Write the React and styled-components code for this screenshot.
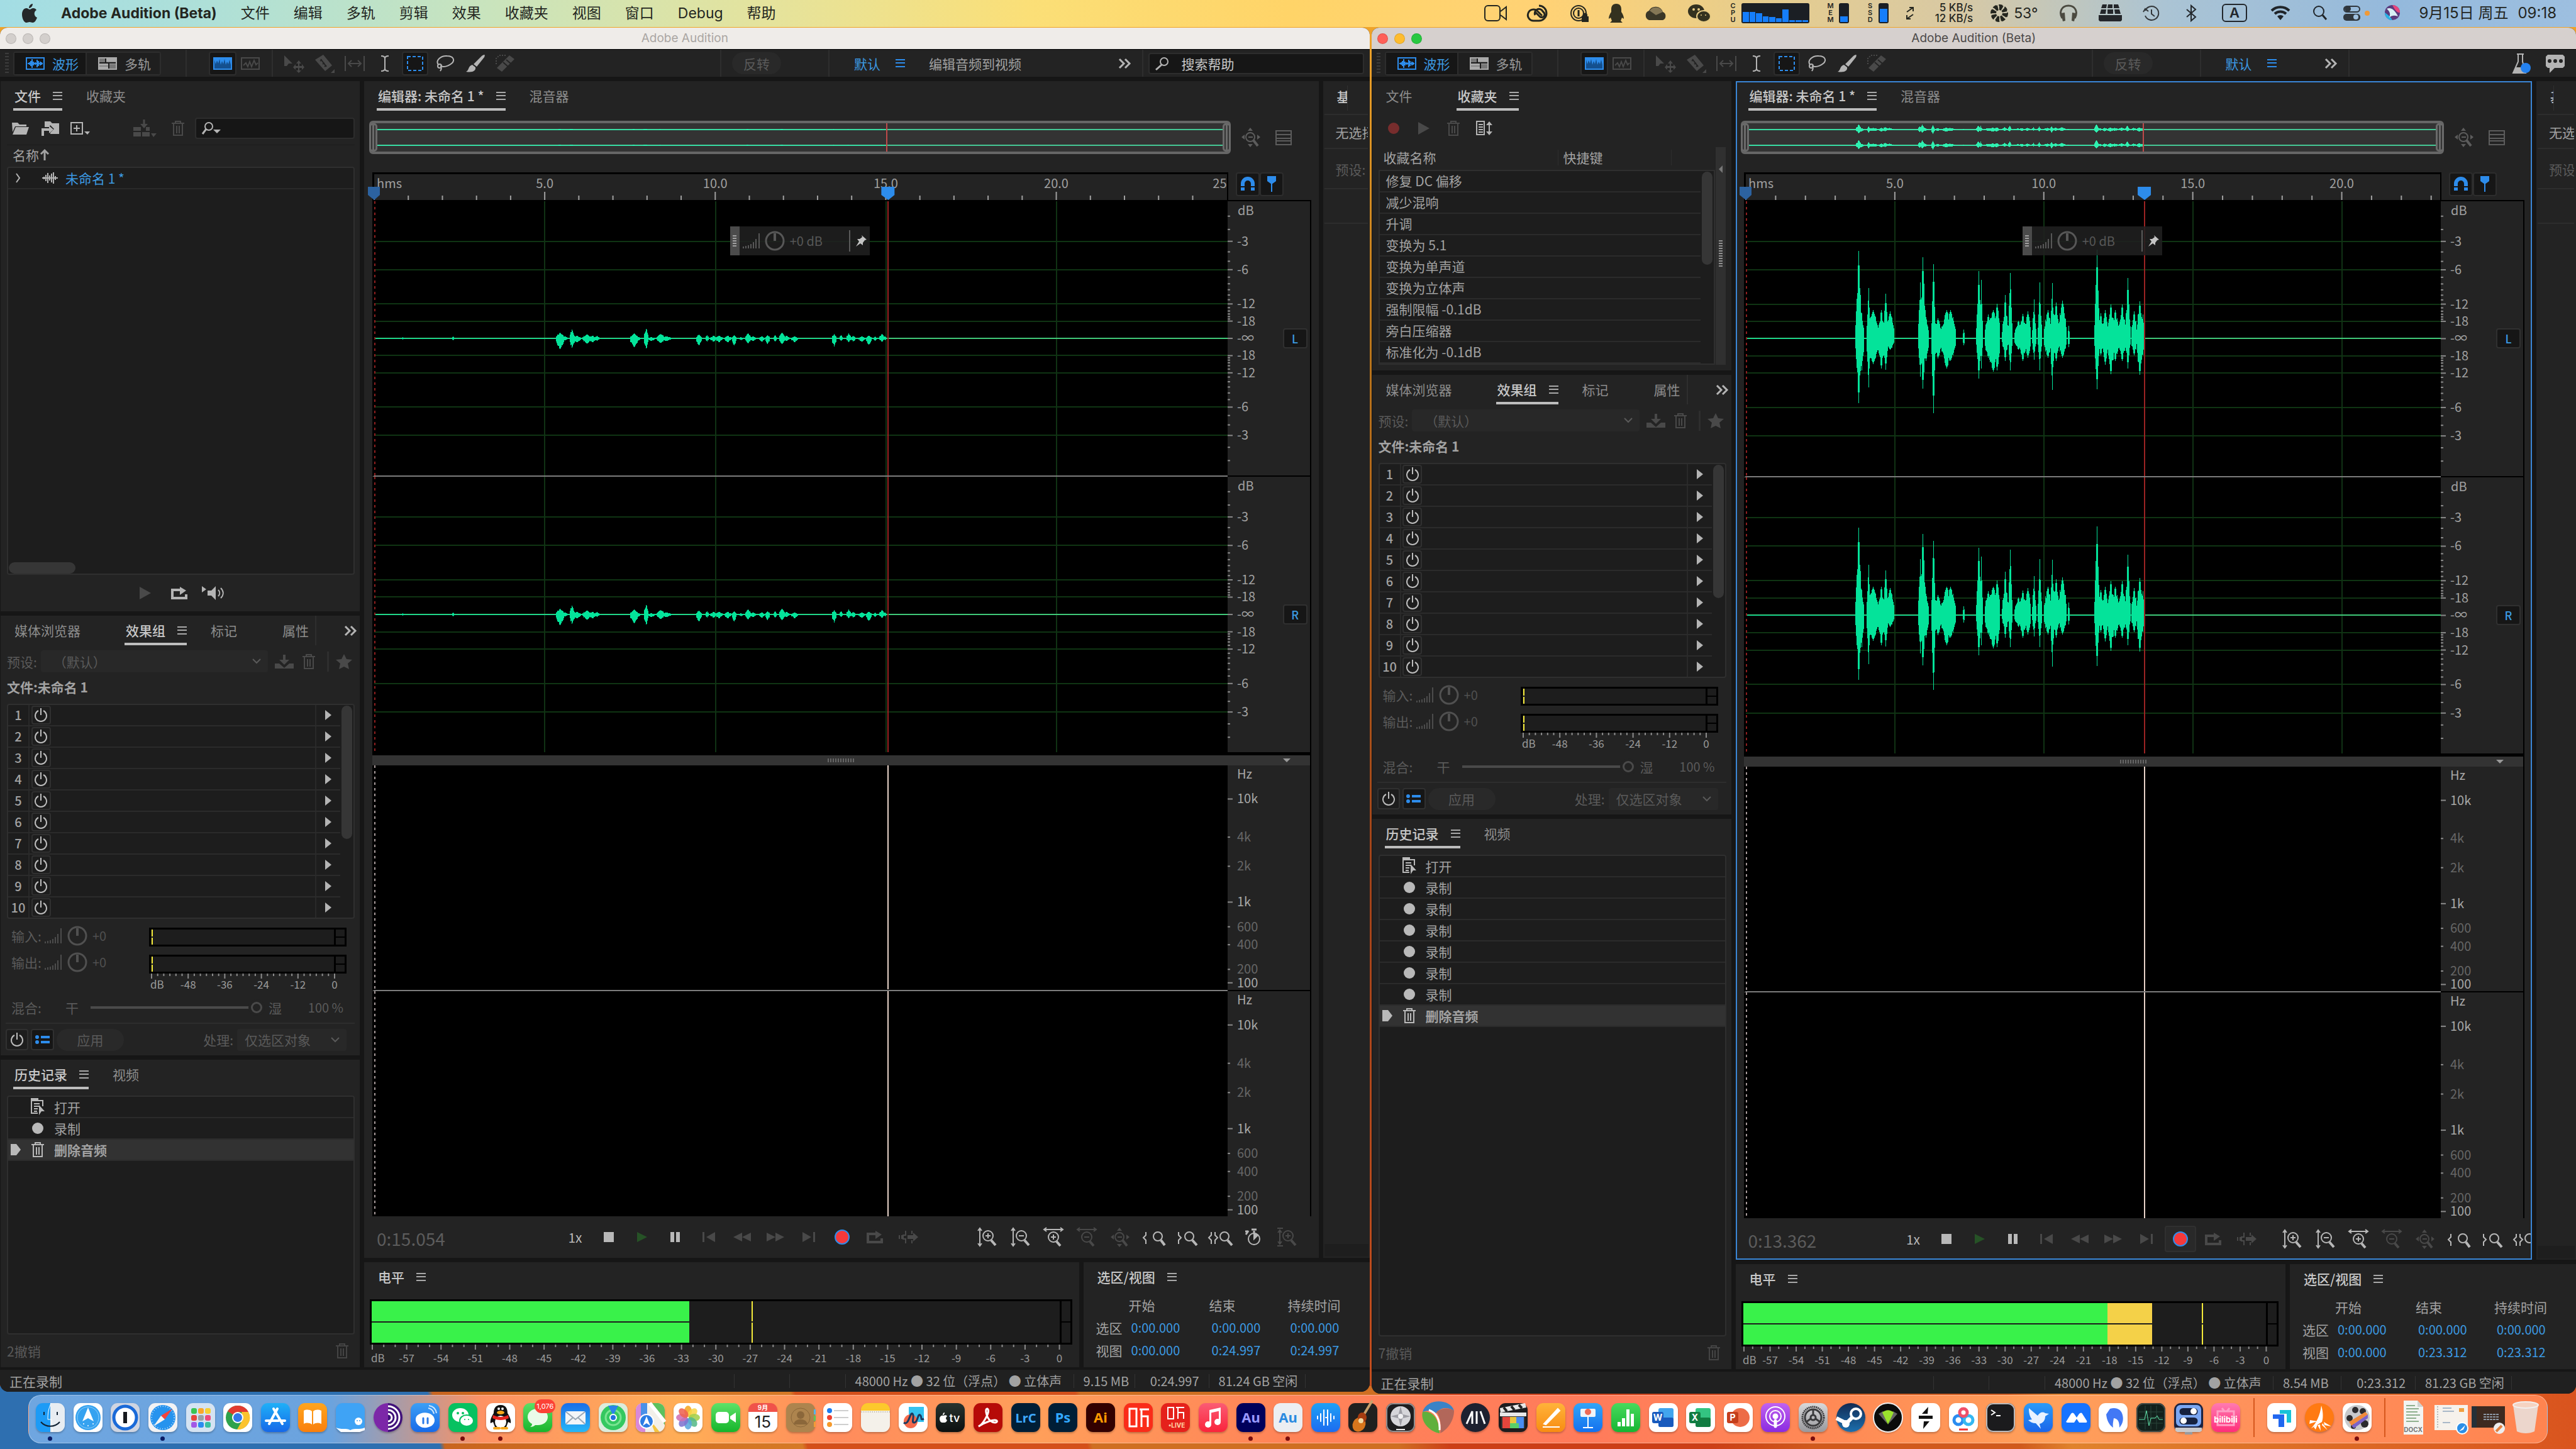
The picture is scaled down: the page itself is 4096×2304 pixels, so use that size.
import styled, { createGlobalStyle } from 'styled-components'

const GlobalStyle = createGlobalStyle`
  * { box-sizing: border-box; }
  body { margin: 0; background: #161616; }
  button, input, select, table { font: inherit; color: inherit; }
  button { padding: 0; border: 0; background: none; }
  h2 { margin: 0; font: inherit; }
`

const uiFont = `'Noto Sans CJK SC', 'Noto Sans', sans-serif`
const macFont = `Inter, 'Noto Sans CJK SC', sans-serif`

const c = {
  gap: '#161616',
  panel: '#232323',
  field: '#1d1d1d',
  line: '#2f2f2f',
  text: '#a2a2a2',
  bright: '#c8c8c8',
  dim: '#5a5a5a',
  off: '#494949',
  blue: '#2d8ceb',
  link: '#3c9ae2'
}

/* ---------- glyphs ---------- */

const glyphs = {
  waveform: [30, 20, <g fill="none" stroke="currentColor"><rect x="1" y="1" width="28" height="18" strokeWidth="2" /><path d="M3 10h24" strokeWidth="2" /><path d="M6 8v4M8 6v8M10 3v14M12 7v6M15 8v4M18 4v12M20 6v8M23 7v6M25 8v4" strokeWidth="2" /></g>],
  multitrack: [30, 20, <g><rect width="30" height="20" fill="currentColor" /><path d="M2 8h26M2 14h26" stroke="#1e1e1e" strokeWidth="1" opacity=".5" /><path d="M2 9h26M12 2v7M17 10v8" stroke="#1e1e1e" strokeWidth="2" /><path d="M2 2h9v6H2zM18 11h10v7H18z" fill="#777" /></g>],
  spectrum: [30, 20, <g><rect width="30" height="20" fill="currentColor" /><path d="M2 4l2 7 2-6 2 5 2-7 2 9 2-6 2 5 2-8 2 9 2-5 2 4 2-7 2 8V18H2z" fill="#14508f" /></g>],
  waveDim: [30, 20, <g fill="none" stroke="currentColor" strokeWidth="2"><rect x="1" y="1" width="28" height="18" /><path d="M4 13l4-4 3 6 3-8 3 8 4-10 3 7 3-3" /></g>],
  move: [32, 26, <g fill="currentColor"><path d="M0 0l13 13H7l-3 4H0z" /><path d="M23 8l4 5h-3v4h4v-3l4 5-4 4v-3h-4v4h3l-4 4-4-4h3v-4h-4v3l-4-4 4-5v3h4v-4h-3z" /></g>],
  razor: [32, 30, <g><path d="M1 9L14 1l14 17-11 9z" fill="currentColor" /><path d="M10 8l9 12M9 11l3-2M13 16l3-2M16 20l3-2" stroke="#232323" strokeWidth="2" /><path d="M32 24v6h-6z" fill="currentColor" /></g>],
  slip: [34, 24, <g fill="none" stroke="currentColor" strokeWidth="2"><path d="M2 0v24M32 0v24M8 12h18M12 7l-5 5 5 5M22 7l5 5-5 5" /></g>],
  ibeam: [14, 26, <path d="M1 1c4 0 6 1 6 4v16c0 3-2 4-6 4M13 1c-4 0-6 1-6 4v16c0 3 2 4 6 4" fill="none" stroke="currentColor" strokeWidth="2" />],
  marquee: [26, 24, <rect x="1" y="1" width="24" height="22" fill="none" stroke="currentColor" strokeWidth="2" strokeDasharray="5 3" />],
  lasso: [30, 26, <g fill="none" stroke="currentColor" strokeWidth="2"><path d="M4 15C-1 8 8 0 18 1c10 0 13 7 7 12-5 4-12 6-18 4" /><circle cx="6" cy="17" r="3" /><path d="M8 19c2 2 0 4-1 6" /></g>],
  brush: [30, 28, <g fill="currentColor"><path d="M29 0c1 0 1 2 0 4L17 19l-5-4L25 2c1-1 3-2 4-2z" /><path d="M10 16l5 4c1 5-4 9-15 7 5-2 3-9 10-11z" /></g>],
  heal: [32, 28, <g><path d="M22 1l8 6-20 20-8-6z" fill="currentColor" /><path d="M12 12l8 7M17 8l7 6" stroke="#232323" strokeWidth="2" /><path d="M16 1H6L1 6v10" fill="none" stroke="currentColor" strokeWidth="2" strokeDasharray="2 2" /></g>],
  menu: [15, 13, <path d="M0 1h15M0 6h15M0 12h15" stroke="currentColor" strokeWidth="2" />],
  more: [18, 16, <path d="M1 1l7 7-7 7M10 1l7 7-7 7" fill="none" stroke="currentColor" strokeWidth="3" />],
  search: [22, 22, <g fill="none" stroke="currentColor"><circle cx="14" cy="8" r="6" strokeWidth="2" /><path d="M10 13l-9 8" strokeWidth="3" /></g>],
  searchDown: [30, 22, <g><circle cx="11" cy="8" r="6" fill="none" stroke="currentColor" strokeWidth="2" /><path d="M7 12l-6 8" stroke="currentColor" strokeWidth="3" /><path d="M18 13h12l-6 6z" fill="currentColor" /></g>],
  folder: [27, 20, <path d="M0 1h9l3 3h11v3H5L1 16zM6 8h21l-4 12H1z" fill="currentColor" />],
  import: [29, 24, <g fill="currentColor"><path d="M6 1h9l3 3h11v17H15v-2l6-6-6-6-2 3H6z" /><path d="M13 8l7 6-7 6v-4H5v8H1V12h12z" /></g>],
  newFile: [31, 20, <g><path d="M1 1h18v18H1zM10 5v10M5 10h10" fill="none" stroke="currentColor" strokeWidth="2" /><path d="M22 15h9l-4 5z" fill="currentColor" /></g>],
  insert: [37, 28, <g><path d="M0 12h12v6H0zM0 20h12v7H0zM14 20h12v7H14zM20 12h6v6h-6z" fill="currentColor" /><path d="M17 0v8" stroke="currentColor" strokeWidth="3" /><path d="M11 7h12l-6 7zM28 22h9l-5 6z" fill="currentColor" /></g>],
  trash: [20, 24, <g fill="none" stroke="currentColor" strokeWidth="2"><path d="M0 4h20M6 4V1h8v3M3 5v18h14V5M8 8v12M12 8v12" /></g>],
  play: [18, 20, <path d="M0 0l18 10L0 20z" fill="currentColor" />],
  loop: [28, 20, <g><path d="M11 5H2v13h22v-6" fill="none" stroke="currentColor" strokeWidth="4" /><path d="M14 0l10 6-10 7z" fill="currentColor" /><path d="M8 5h8" stroke="currentColor" strokeWidth="4" /></g>],
  speaker: [36, 24, <g><path d="M0 1l7 5-7 5zM9 8h6l7-7v22l-7-7H9z" fill="currentColor" /><path d="M26 7c3 3 3 7 0 10M30 4c5 5 5 11 0 16" fill="none" stroke="currentColor" strokeWidth="2" /></g>],
  chevronRight: [8, 16, <path d="M1 1l5 7-5 7" fill="none" stroke="currentColor" strokeWidth="2" />],
  chevronDown: [14, 8, <path d="M1 1l6 6 6-6" fill="none" stroke="currentColor" strokeWidth="2" />],
  wave: [25, 18, <path d="M0 9h25M3 7v4M6 4v10M9 1v16M12 5v8M15 2v14M18 0v18M21 6v6" stroke="currentColor" strokeWidth="2" />],
  arrowUp: [14, 18, <path d="M7 18V3M1 8l6-6 6 6" fill="none" stroke="currentColor" strokeWidth="3" />],
  save: [30, 22, <g fill="currentColor"><path d="M13 0h4v8h6l-8 8-8-8h6z" /><path d="M0 14h7l8 7 8-7h7v8H0z" /></g>],
  star: [26, 24, <path d="M13 0l4 8 9 1-7 6 2 9-8-4-8 4 2-9-7-6 9-1z" fill="currentColor" />],
  power: [20, 22, <path d="M6 4a9 9 0 1 0 8 0M10 0v11" fill="none" stroke="currentColor" strokeWidth="2" />],
  right: [10, 16, <path d="M0 0l10 8-10 8z" fill="currentColor" />],
  bars: [27, 24, <path d="M1 21v3M5 20v4M9 19v5M13 17v7M17 14v10M21 9v15M26 0v24" stroke="currentColor" strokeWidth="2" />],
  knob: [32, 32, <g fill="none" stroke="currentColor"><circle cx="16" cy="16" r="14" strokeWidth="3" /><path d="M16 4v12" strokeWidth="4" /></g>],
  list: [22, 14, <g fill="currentColor"><circle cx="2" cy="3" r="3" /><circle cx="2" cy="11" r="3" /><path d="M8 1h14v4H8zM8 9h14v4H8z" /></g>],
  openDoc: [22, 26, <g><path d="M0 0h11v3h8v9" fill="none" stroke="currentColor" strokeWidth="2" /><path d="M0 0h10v4H0z" fill="currentColor" /><path d="M1 2v21h10M5 8h9M5 12h8M5 16h6M5 20h5" fill="none" stroke="currentColor" strokeWidth="2" /><path d="M13 10l9 10h-5l-4 6z" fill="currentColor" /></g>],
  dot: [18, 18, <circle cx="9" cy="9" r="9" fill="currentColor" />],
  pointer: [16, 18, <path d="M0 0h9l7 9-7 9H0z" fill="currentColor" />],
  sort: [26, 24, <g><path d="M1 1h12v21H1zM4 6h7M4 10h7M4 14h7M4 18h7" fill="none" stroke="currentColor" strokeWidth="2" /><path d="M21 3v18" stroke="currentColor" strokeWidth="2" /><path d="M16 7l5-6 5 6zM16 17l5 6 5-6z" fill="currentColor" /></g>],
  fit: [30, 31, <g><circle cx="14" cy="15" r="7" fill="none" stroke="currentColor" strokeWidth="2" /><path d="M11 15h7" stroke="currentColor" strokeWidth="2" /><path d="M19 20l7 9" stroke="currentColor" strokeWidth="4" /><path d="M10 5l4-5 4 5zM10 26l4 5 4-5zM5 11v8l-5-4zM25 11v8l5-4z" fill="currentColor" /></g>],
  rows: [26, 24, <g><rect x="1" y="1" width="24" height="22" fill="none" stroke="currentColor" strokeWidth="2" /><path d="M1 7h24M1 13h24M1 17h24" stroke="currentColor" strokeWidth="2" /></g>],
  magnet: [22, 22, <g><path d="M3 21V10a8 8 0 0 1 16 0v11" fill="none" stroke="currentColor" strokeWidth="6" /><path d="M0 15h6M16 15h6" stroke="#161616" strokeWidth="2" /></g>],
  pin: [14, 26, <g><path d="M0 0h14v8l-7 5-7-5z" fill="currentColor" /><path d="M7 12v13" stroke="currentColor" strokeWidth="2" /></g>],
  tack: [18, 18, <path d="M10 0l8 7-3 1-3 4v4l-4-3-7 5 5-8-3-4h4l4-3z" fill="currentColor" />],
  stop: [16, 16, <rect width="16" height="16" fill="currentColor" />],
  playSmall: [16, 16, <path d="M0 0l16 8-16 8z" fill="currentColor" />],
  pause: [16, 16, <path d="M0 0h6v16H0zM9 0h6v16H9z" fill="currentColor" />],
  prev: [20, 16, <path d="M0 0h3v16H0zM20 0v16L6 8z" fill="currentColor" />],
  rewind: [28, 14, <path d="M14 0v14L0 7zM28 0v14L14 7z" fill="currentColor" />],
  forward: [28, 14, <path d="M0 0v14l14-7zM14 0v14l14-7z" fill="currentColor" />],
  next: [20, 16, <path d="M17 0h3v16h-3zM0 0v16l14-8z" fill="currentColor" />],
  record: [26, 26, <circle cx="13" cy="13" r="11" fill="#f5393b" stroke={c.blue} strokeWidth="2" />],
  skip: [30, 20, <g><path d="M10 0v7h-4v6h4v7M20 0v5M20 15v5M0 7v6M4 7v6" fill="none" stroke="currentColor" strokeWidth="2" /><path d="M13 7h9V3l8 7-8 7v-4h-9z" fill="currentColor" /></g>],
  zoomInV: [30, 30, <g fill="none" stroke="currentColor" strokeWidth="2"><path d="M4 2v26M1 5l3-4 3 4M1 25l3 4 3-4" /><circle cx="17" cy="13" r="8" /><path d="M13 13h8M17 9v8" /><path d="M22 20l7 8" strokeWidth="4" /></g>],
  zoomOutV: [30, 30, <g fill="none" stroke="currentColor" strokeWidth="2"><path d="M4 2v26M1 5l3-4 3 4M1 25l3 4 3-4" /><circle cx="17" cy="13" r="8" /><path d="M13 13h8" /><path d="M22 20l7 8" strokeWidth="4" /></g>],
  zoomInH: [32, 30, <g fill="none" stroke="currentColor" strokeWidth="2"><path d="M2 3h28M5 0L1 3l4 3M27 0l4 3-4 3" /><circle cx="16" cy="15" r="8" /><path d="M12 15h8M16 11v8" /><path d="M21 22l6 7" strokeWidth="4" /></g>],
  zoomOutH: [32, 30, <g fill="none" stroke="currentColor" strokeWidth="2"><path d="M2 3h28M5 0L1 3l4 3M27 0l4 3-4 3" /><circle cx="16" cy="15" r="8" /><path d="M12 15h8" /><path d="M21 22l6 7" strokeWidth="4" /></g>],
  zoomL: [34, 28, <g fill="none" stroke="currentColor" strokeWidth="2"><path d="M5 6v5l-4 4 4 4v6" /><circle cx="24" cy="13" r="7" /><path d="M29 19l6 8" strokeWidth="4" /></g>],
  zoomR: [32, 28, <g fill="none" stroke="currentColor" strokeWidth="2"><path d="M3 6v5l4 4-4 4v6" /><circle cx="20" cy="13" r="7" /><path d="M25 19l7 8" strokeWidth="4" /></g>],
  zoomLR: [38, 28, <g fill="none" stroke="currentColor" strokeWidth="2"><path d="M5 6v5l-4 4 4 4v6M11 6v5l4 4-4 4v6" /><circle cx="26" cy="13" r="7" /><path d="M31 19l7 8" strokeWidth="4" /></g>],
  timer: [26, 28, <g fill="none" stroke="currentColor" strokeWidth="2"><circle cx="14" cy="17" r="9" /><path d="M14 4v4M10 2h8M1 10l4-6M0 5h5" strokeWidth="3" /><path d="M14 17V8a9 9 0 0 1 6 3z" fill="currentColor" /></g>],
  zoomBar: [30, 30, <g fill="none" stroke="currentColor" strokeWidth="2"><path d="M4 4v22M0 1h9M0 29h9M1 8l3-4 3 4M1 22l3 4 3-4" /><circle cx="17" cy="13" r="8" /><path d="M13 13h8M17 9v8" /><path d="M22 20l7 8" strokeWidth="4" /></g>],
  flask: [30, 32, <g><path d="M8 1h11M10 1v12L2 31h20l-5-18V1" fill="none" stroke="#b4b4b4" strokeWidth="2" /><path d="M6 22h12l4 9H2z" fill="#b4b4b4" /><circle cx="22" cy="23" r="8" fill="#2482f0" /></g>],
  chat: [30, 30, <g><path d="M3 1h24l3 3v15l-3 3H14l-8 8v-8H3l-3-3V4z" fill="#b4b4b4" /><g fill="#232323"><circle cx="6" cy="11" r="3" /><circle cx="15" cy="11" r="3" /><circle cx="24" cy="11" r="3" /></g></g>]
}

const Glyph = styled.svg`
  display: block;
  flex: none;
  overflow: visible;
  color: ${p => p.$color || 'inherit'};
`

const Icon = ({ name, color }) => {
  const [w, h, art] = glyphs[name]
  return (
    <Glyph width={w} height={h} viewBox={`0 0 ${w} ${h}`} $color={color} aria-hidden="true">
      {art}
    </Glyph>
  )
}

/* ---------- desktop ---------- */

const Desktop = styled.div`
  display: flex;
  flex-direction: column;
  min-width: 100vw;
  height: 100vh;
  overflow: hidden;
  font-family: ${uiFont};
  font-size: 21px;
  line-height: 30px;
  color: ${c.text};
  background:
    linear-gradient(77deg, #2e6fb0 0 17%, #c9651f 17.2%, #d67a26 31%, #d4501a 31.2% 42%, #cf6f22 42.2% 54%, #cc3f17 56% 66%, #d05a1d 70% 78%, #e0832d 80%, #d9531e 100%) bottom / 100% 100px no-repeat,
    linear-gradient(180deg, #f3a72b, #b8741b 25%, #a2431a 60%, #c9501f);
`

const MenuBar = styled.header`
  display: flex;
  align-items: center;
  height: 43px;
  margin-bottom: 1px;
  padding: 0 31px 2px 35px;
  font-family: ${macFont};
  font-size: 23px;
  line-height: 28px;
  color: #24261f;
  background: linear-gradient(90deg, #a3dde4, #aee0d8 8%, #c9e4bd 19%, #e5e39c 30%, #fbdf77 40%, #ffd468 50%, #ffd275 60%, #e7cd8c 68%, #d8c9a4 76%, #abc4d4 84%, #94b9dc 93%, #9dbfe0);
`

const Menus = styled.nav`
  display: flex;
  align-items: center;
  gap: 38px;
`

const MenuItem = styled.button`
  font-weight: ${p => (p.$strong ? 700 : 400)};
  white-space: nowrap;
`

const Tray = styled.div`
  display: flex;
  align-items: center;
  margin-left: auto;
`

const TrayItem = styled.button`
  display: flex;
  align-items: center;
  gap: 8px;
  height: 34px;
  margin-left: ${p => p.$gap || 32}px;
`

const StackedLetters = styled.span`
  width: 11px;
  font-size: 11px;
  line-height: 11px;
  font-weight: 600;
  text-align: center;
  word-break: break-all;
`

const Gauge = styled.span`
  display: flex;
  align-items: flex-end;
  gap: 1px;
  width: ${p => p.$width}px;
  height: 32px;
  padding: 2px;
  border-radius: 3px;
  background: #1b1f24;
`

const GaugeBar = styled.i`
  flex: 1;
  background: #157efb;
`

const NetRates = styled.span`
  width: 86px;
  font-size: 17px;
  line-height: 17px;
  font-weight: 500;
  text-align: right;
`

const Clock = styled.time`
  display: flex;
  gap: 15px;
  margin-left: 29px;
  font-size: 24px;
  white-space: nowrap;
`

const menus = ['文件', '编辑', '多轨', '剪辑', '效果', '收藏夹', '视图', '窗口', 'Debug', '帮助']
const cpuLoad = [56, 56, 50, 32, 26, 20, 70, 8, 8, 8]

const TraySvg = ({ w, h = 28, children }) => (
  <Glyph width={w} height={h} viewBox={`0 0 ${w} ${h}`} aria-hidden="true">{children}</Glyph>
)

const TopMenu = () => (
  <MenuBar>
    <Menus>
      <MenuItem aria-label="Apple">
        <TraySvg w={24} h={30}>
          <path d="M17 0c0 4-3 7-6 7 0-4 3-7 6-7zM12 9c2 0 3-2 6-2 2 0 4 1 5 3-5 3-4 10 1 12-2 5-4 8-7 8-2 0-3-1-5-1s-3 1-5 1C3 30 0 23 0 17 0 11 3 7 7 7c2 0 4 2 5 2z" fill="#25282a" />
        </TraySvg>
      </MenuItem>
      <MenuItem $strong>Adobe Audition (Beta)</MenuItem>
      {menus.map(name => <MenuItem key={name}>{name}</MenuItem>)}
    </Menus>
    <Tray>
      <TrayItem aria-label="录屏"><TraySvg w={37} h={26}><rect x="1" y="1" width="24" height="24" rx="5" fill="none" stroke="#24261f" strokeWidth="2" /><path d="M26 10l9-7v20l-9-7" fill="none" stroke="#24261f" strokeWidth="2" /></TraySvg></TrayItem>
      <TrayItem aria-label="Creative Cloud"><TraySvg w={35} h={26}><path d="M18 1a12 12 0 1 1 0 24H10a9 9 0 1 1 5-16l8 8" fill="none" stroke="#24261f" strokeWidth="3" /><path d="M12 16a6 6 0 0 1 12-6c6 5 2 11-4 9l-8-8" fill="none" stroke="#24261f" strokeWidth="3" /></TraySvg></TrayItem>
      <TrayItem aria-label="1Password"><TraySvg w={30} h={28}><circle cx="14" cy="14" r="12" fill="none" stroke="#24261f" strokeWidth="2" /><circle cx="14" cy="14" r="8" fill="none" stroke="#24261f" strokeWidth="2" /><path d="M14 9v10" stroke="#24261f" strokeWidth="3" /><path d="M19 19h11v9H19zM21 19v-2a3 3 0 0 1 7 0v2" fill="#24261f" /></TraySvg></TrayItem>
      <TrayItem aria-label="QQ"><TraySvg w={24} h={30}><path d="M12 0c6 0 8 4 8 9v4c3 4 4 8 4 11l-3-2-2 5 3 3H2l3-3-2-5-3 2c0-3 1-7 4-11V9c0-5 2-9 8-9z" fill="#33311f" /></TraySvg></TrayItem>
      <TrayItem aria-label="OneDrive"><TraySvg w={37} h={22}><path d="M8 22a8 8 0 0 1 0-15A12 12 0 0 1 30 9a7 7 0 0 1 0 13z" fill="#3b3728" /><path d="M9 7a12 12 0 0 1 21 2l-11 5z" fill="#857756" /></TraySvg></TrayItem>
      <TrayItem aria-label="微信"><TraySvg w={37} h={28}><ellipse cx="14" cy="11" rx="13" ry="11" fill="#33311f" /><ellipse cx="26" cy="19" rx="11" ry="9" fill="#33311f" stroke="#e6cb85" strokeWidth="2" /><g fill="#e6cb85"><circle cx="10" cy="8" r="2" /><circle cx="18" cy="8" r="2" /><circle cx="22" cy="17" r="1" /><circle cx="29" cy="17" r="1" /></g></TraySvg></TrayItem>
      <TrayItem $gap={30}><StackedLetters>CPU</StackedLetters><Gauge $width={108}>{cpuLoad.map((v, i) => <GaugeBar key={i} style={{ height: `${v}%` }} />)}</Gauge></TrayItem>
      <TrayItem $gap={28}><StackedLetters>MEM</StackedLetters><Gauge $width={16}><GaugeBar style={{ height: '30%' }} /></Gauge></TrayItem>
      <TrayItem $gap={28}><StackedLetters>SSD</StackedLetters><Gauge $width={16}><GaugeBar style={{ height: '72%' }} /></Gauge></TrayItem>
      <TrayItem $gap={28} aria-label="网络"><TraySvg w={12} h={20}><path d="M1 8l10-7M5 1h6v6M11 12L1 19M1 13v6h6" fill="none" stroke="#24261f" strokeWidth="2" /></TraySvg><NetRates>5 KB/s<br />12 KB/s</NetRates></TrayItem>
      <TrayItem $gap={28}><TraySvg w={29} h={28}><circle cx="14" cy="14" r="9" fill="none" stroke="#24261f" strokeWidth="8" strokeDasharray="5 2" /><circle cx="14" cy="14" r="13" fill="none" stroke="#24261f" strokeWidth="2" strokeDasharray="6 4" /></TraySvg>53°</TrayItem>
      <TrayItem $gap={35} aria-label="耳机"><TraySvg w={28} h={27}><path d="M4 22C-2 11 4 2 14 2s16 9 10 20" fill="none" stroke="#4b4a40" strokeWidth="3" /><path d="M2 14l6-1 1 13-4 1zM26 14l-6-1-1 13 4 1z" fill="#4b4a40" /></TraySvg></TrayItem>
      <TrayItem $gap={34} aria-label="存储"><TraySvg w={37} h={27}><path d="M6 0h7l-1 6H4zM15 0h7v6h-8zM24 0h7l2 6h-9zM4 8h8l-1 7H2zM14 8h9v7h-9zM25 8h8l2 7h-9zM0 17h37v8l-2 2H2l-2-2z" fill="#24262a" /></TraySvg></TrayItem>
      <TrayItem $gap={34} aria-label="时间机器"><TraySvg w={26} h={26}><path d="M3 9a11 11 0 1 1 0 8M13 7v7l5 4M0 11l3-5 5 4" fill="none" stroke="#33373a" strokeWidth="2" /></TraySvg></TrayItem>
      <TrayItem $gap={42} aria-label="蓝牙"><TraySvg w={17} h={26}><path d="M1 7l14 12-7 6V1l7 6L1 19" fill="none" stroke="#24282c" strokeWidth="2" /></TraySvg></TrayItem>
      <TrayItem $gap={40} aria-label="输入法"><TraySvg w={40} h={29}><rect x="1" y="1" width="38" height="27" rx="5" fill="none" stroke="#22272d" strokeWidth="2" /><text x="20" y="22" fontSize="22" fontWeight="600" textAnchor="middle" fill="#22272d">A</text></TraySvg></TrayItem>
      <TrayItem $gap={37} aria-label="无线局域网"><TraySvg w={32} h={23}><path d="M2 8a20 20 0 0 1 28 0M7 13a13 13 0 0 1 18 0" fill="none" stroke="#1f2429" strokeWidth="4" /><path d="M11 17a7 7 0 0 1 10 0l-5 6z" fill="#1f2429" /></TraySvg></TrayItem>
      <TrayItem $gap={36} aria-label="搜索"><TraySvg w={22} h={23}><circle cx="9" cy="9" r="8" fill="none" stroke="#1f2429" strokeWidth="2" /><path d="M15 15l6 7" stroke="#1f2429" strokeWidth="3" /></TraySvg></TrayItem>
      <TrayItem $gap={26} aria-label="控制中心"><TraySvg w={42} h={24}><rect x="1" y="1" width="25" height="9" rx="5" fill="none" stroke="#2f363d" strokeWidth="2" /><circle cx="7" cy="5" r="5" fill="#2f363d" /><rect x="0" y="13" width="27" height="11" rx="5" fill="#2f363d" /><circle cx="20" cy="18" r="4" fill="#9fc0df" /><circle cx="38" cy="12" r="4" fill="#f09a37" /></TraySvg></TrayItem>
      <TrayItem $gap={24} aria-label="Siri"><TraySvg w={25} h={25}><circle cx="12" cy="12" r="12" fill="#5b3b7d" /><path d="M12 0a12 12 0 0 1 12 12c-5 0-8-4-12-12z" fill="#e9457c" /><path d="M0 12c4 3 8 5 12 12A12 12 0 0 1 0 12z" fill="#27b3e6" /><path d="M3 6c6-3 12 0 18 12-5-2-10-2-14 2 2-5 2-9-4-14z" fill="#d9f0f4" /></TraySvg></TrayItem>
      <Clock><span>9月15日 周五</span><span>09:18</span></Clock>
    </Tray>
  </MenuBar>
)

/* ---------- window chrome ---------- */

const Windows = styled.main`
  display: grid;
  grid-template-columns: minmax(0, 2177fr) minmax(0, 1915fr);
  gap: 3px;
  flex: 1;
  min-height: 0;
`

const AppWindow = styled.section`
  display: flex;
  flex-direction: column;
  min-height: 0;
  margin-bottom: ${p => (p.$front ? 0 : 3)}px;
  overflow: hidden;
  border-radius: 12px 12px 14px 14px;
  background: ${c.gap};
`

const TitleBar = styled.div`
  display: grid;
  grid-template-columns: 1fr auto 1fr;
  align-items: center;
  height: 35px;
  padding: 0 9px;
  border-bottom: 1px solid #000;
  font-family: ${macFont};
  font-size: 19px;
  color: ${p => (p.$front ? '#4d4a49' : '#aaa6a3')};
  background: ${p => (p.$front ? '#d6d0ce' : '#efece9')};
`

const Lights = styled.div`
  display: flex;
  gap: 10px;
`

const Light = styled.button`
  width: 17px;
  height: 17px;
  border-radius: 50%;
  border: 1px solid rgba(0, 0, 0, 0.12);
  background: ${p => p.$color};
`

const Toolbar = styled.div`
  display: flex;
  flex: none;
  height: 43px;
  margin-bottom: 7px;
  background: ${c.panel};
`

const ToolSection = styled.div`
  display: flex;
  align-items: center;
  flex: ${p => p.$flex || 'none'};
  gap: ${p => p.$gap || 0}px;
  padding: 0 ${p => p.$right || 0}px 0 ${p => p.$left || 0}px;
  border-right: ${p => (p.$last ? '0' : '2px solid #2e2e2e')};
`

const Grip = styled.i`
  width: 6px;
  height: 34px;
  margin-right: 7px;
  background: repeating-linear-gradient(180deg, #3c3c3c 0 2px, transparent 2px 5px);
`

const ModeSwitch = styled.div`
  display: flex;
  height: 38px;
  border: 2px solid #2d2d2d;
  border-radius: 4px;
`

const ModeButton = styled.button`
  display: flex;
  align-items: center;
  gap: 12px;
  padding: 0 ${p => (p.$on ? 11 : 14)}px 0 18px;
  color: ${p => (p.$on ? c.link : '#999')};
  background: ${p => (p.$on ? '#161616' : '#1f1f1f')};
  & + & { border-left: 2px solid #2d2d2d; }
`

const ToolButton = styled.button`
  display: flex;
  align-items: center;
  justify-content: center;
  width: ${p => p.$width || 42}px;
  height: 38px;
  border-radius: 4px;
  border: 2px solid ${p => (p.$on ? '#2d2d2d' : 'transparent')};
  background: ${p => (p.$on ? '#161616' : 'transparent')};
  color: ${p => p.$color || '#b4b4b4'};
`

const Pill = styled.button`
  width: ${p => p.$width}px;
  height: 35px;
  border-radius: 18px;
  background: #292929;
  color: ${c.dim};
`

const Workspace = styled.button`
  display: flex;
  align-items: center;
  gap: 24px;
  color: ${p => (p.$on ? c.link : c.text)};
`

const PlainButton = styled.button`
  display: flex;
  align-items: center;
  justify-content: center;
  color: ${p => p.$color || '#b4b4b4'};
  margin-left: ${p => (p.$push ? 'auto' : `${p.$gap || 0}px`)};
`

const SearchBox = styled.label`
  display: flex;
  align-items: center;
  flex: 1;
  gap: ${p => p.$gap || 6}px;
  height: ${p => p.$height || 34}px;
  min-width: 0;
  padding: 0 9px;
  border: 2px solid #2d2d2d;
  border-radius: 4px;
  background: #161616;
  input {
    flex: 1;
    min-width: 0;
    padding: 0;
    border: 0;
    outline: 0;
    background: none;
  }
  input::placeholder { color: ${c.bright}; opacity: 1; }
`

const tools = [
  ['move', '移动工具', c.off],
  ['razor', '切断工具', c.off],
  ['slip', '滑动工具', c.off],
  ['ibeam', '时间选择工具'],
  ['marquee', '框选工具', c.blue],
  ['lasso', '套索选择工具'],
  ['brush', '画笔选择工具'],
  ['heal', '污点修复画笔', c.off]
]

const TopToolbar = ({ front }) => (
  <Toolbar>
    <ToolSection $left={8} $right={39}>
      <Grip />
      <ModeSwitch>
        <ModeButton $on><Icon name="waveform" color={c.blue} />波形</ModeButton>
        <ModeButton><Icon name="multitrack" color="#aaa" />多轨</ModeButton>
      </ModeSwitch>
    </ToolSection>
    <ToolSection $left={35} $right={12}>
      <ToolButton $on $width={44} $color={c.blue} aria-label="波形视图"><Icon name="spectrum" /></ToolButton>
      <ToolButton $width={44} $color={c.off} aria-label="频谱视图"><Icon name="waveDim" /></ToolButton>
    </ToolSection>
    <ToolSection $flex="0 0 713px" $left={13} $gap={6}>
      {tools.map(([name, label, color]) => (
        <ToolButton key={name} $on={name === 'marquee'} $color={color} aria-label={label}><Icon name={name} /></ToolButton>
      ))}
    </ToolSection>
    <ToolSection $left={17} $right={75}><Pill $width={78} disabled>反转</Pill></ToolSection>
    <ToolSection $flex={front ? '0 0 236px' : '1'} $left={39} $right={19} $gap={38}>
      <Workspace $on>默认 <Icon name="menu" color={c.blue} /></Workspace>
      {!front && <Workspace>编辑音频到视频</Workspace>}
      <PlainButton $push aria-label="更多工作区"><Icon name="more" /></PlainButton>
    </ToolSection>
    {front ? (
      <ToolSection $flex="1" $right={18} $last>
        <PlainButton $push aria-label="Beta 反馈"><Icon name="flask" /></PlainButton>
        <PlainButton $gap={24} aria-label="反馈"><Icon name="chat" /></PlainButton>
      </ToolSection>
    ) : (
      <ToolSection $flex="0 0 360px" $left={8} $right={9} $last>
        <SearchBox $gap={20}><Icon name="search" color="#b4b4b4" /><input aria-label="搜索帮助" placeholder="搜索帮助" /></SearchBox>
      </ToolSection>
    )}
  </Toolbar>
)

const Columns = styled.div`
  display: grid;
  grid-template-columns: 571px minmax(0, 1fr);
  gap: 7px;
  flex: 1;
  min-height: 0;
  margin: 0 0 4px 1px;
`

const Column = styled.div`
  display: flex;
  flex-direction: column;
  gap: 7px;
  min-width: 0;
  min-height: 0;
`

const Panel = styled.section`
  display: flex;
  flex-direction: column;
  flex: ${p => (p.$grow ? `${p.$grow} 1 0` : 'none')};
  min-width: 0;
  min-height: 0;
  overflow: hidden;
  background: ${c.panel};
  outline: ${p => (p.$focus ? `2px solid #3a86d6` : '0')};
  outline-offset: -2px;
`

const TabBar = styled.div`
  display: flex;
  align-items: stretch;
  flex: none;
  height: 47px;
`

const TabList = styled.div`
  display: flex;
  gap: 36px;
  flex: 0 0 auto;
  width: ${p => (p.$width ? `${p.$width}px` : 'auto')};
  padding-left: 20px;
  overflow: hidden;
  border-right: ${p => (p.$width ? `2px solid #2e2e2e` : '0')};
`

const Tab = styled.button`
  display: flex;
  align-items: center;
  flex: none;
  gap: 19px;
  padding: 2px ${p => (p.$on ? 0 : 34)}px 0 2px;
  border-bottom: 4px solid ${p => (p.$line ? '#bdbdbd' : 'transparent')};
  color: ${p => (p.$on ? c.bright : '#8d8d8d')};
  font-weight: ${p => (p.$on ? 500 : 400)};
  white-space: nowrap;
  svg { margin-top: 2px; }
`

const Tabs = ({ names, active, width, more, flat }) => (
  <TabBar role="tablist">
    <TabList $width={width}>
      {names.map(name => (
        <Tab key={name} role="tab" $on={name === active} $line={name === active && !flat}>
          {name}
          {name === active && <Icon name="menu" color="#a8a8a8" />}
        </Tab>
      ))}
    </TabList>
    {more && <MoreTabs aria-label="更多面板"><Icon name="more" /></MoreTabs>}
  </TabBar>
)

const MoreTabs = styled.button`
  margin-left: auto;
  padding: 0 6px 0 0;
  color: #b4b4b4;
`

/* ---------- file panel ---------- */

const PanelTools = styled.div`
  display: flex;
  align-items: center;
  flex: none;
  height: 34px;
  margin: 11px 8px 9px 18px;
`

const ListBox = styled.div`
  position: relative;
  flex: ${p => (p.$fill ? 1 : 'none')};
  min-height: 0;
  margin: 0 8px 0 10px;
  overflow: hidden;
  border: 2px solid ${c.line};
  border-radius: 4px;
  background: ${c.field};
`

const ColumnHead = styled.div`
  display: flex;
  align-items: center;
  flex: none;
  gap: 2px;
  height: 35px;
  margin: 0 8px 0 10px;
  padding: 0 0 5px 9px;
  border-top: 1px solid #1c1c1c;
`

const FileRow = styled.div`
  display: flex;
  align-items: center;
  height: 34px;
  padding-left: 12px;
  border-bottom: 2px solid #292929;
  color: ${c.link};
`

const FileIcon = styled.span`
  margin: 0 12px 0 34px;
  color: #b4b4b4;
`

const ScrollThumb = styled.i`
  position: absolute;
  border-radius: 9px;
  background: #363636;
  ${p => (p.$flat
    ? 'left: 1px; bottom: 0; width: 106px; height: 18px;'
    : `right: 2px; top: 1px; width: 17px; height: ${p.$length}px;`)}
`

const PreviewBar = styled.div`
  display: flex;
  align-items: center;
  justify-content: center;
  flex: none;
  gap: 21px;
  height: 58px;
  padding-left: 6px;
  color: #b4b4b4;
`

const FilesPanel = () => (
  <Panel $grow={842}>
    <Tabs names={['文件', '收藏夹']} active="文件" />
    <PanelTools>
      <PlainButton aria-label="打开文件"><Icon name="folder" /></PlainButton>
      <PlainButton $gap={19} aria-label="导入文件"><Icon name="import" /></PlainButton>
      <PlainButton $gap={18} aria-label="新建文件"><Icon name="newFile" /></PlainButton>
      <PlainButton $gap={69} $color={c.off} aria-label="插入到多轨"><Icon name="insert" /></PlainButton>
      <PlainButton $gap={24} $color={c.off} aria-label="删除"><Icon name="trash" /></PlainButton>
      <PlainButton $gap={17} />
      <SearchBox><Icon name="searchDown" color="#b4b4b4" /><input aria-label="搜索文件" /></SearchBox>
    </PanelTools>
    <ColumnHead>名称<Icon name="arrowUp" /></ColumnHead>
    <ListBox $fill>
      <FileRow>
        <Icon name="chevronRight" color="#b4b4b4" />
        <FileIcon><Icon name="wave" /></FileIcon>
        未命名 1 *
      </FileRow>
      <ScrollThumb $flat />
    </ListBox>
    <PreviewBar>
      <PlainButton $color={c.off} aria-label="播放"><Icon name="play" /></PlainButton>
      <PlainButton $gap={11} aria-label="循环播放"><Icon name="loop" /></PlainButton>
      <PlainButton aria-label="自动播放"><Icon name="speaker" /></PlainButton>
    </PreviewBar>
  </Panel>
)

const FavoritesBody = styled.div`
  display: grid;
  grid-template-columns: minmax(0, 1fr) 16px;
  gap: 1px;
  flex: 1;
  min-height: 0;
  margin: 4px 9px 9px 10px;
`

const FavoritesMain = styled.div`
  display: flex;
  flex-direction: column;
  min-height: 0;
`

const FavoritesHead = styled.div`
  display: grid;
  grid-template-columns: 286px 180px 1fr;
  flex: none;
  height: 25px;
  margin: 4px 0 7px;
  line-height: 25px;
  span { padding-left: 8px; border-right: 1px solid #2e2e2e; }
`

const FavoritesList = styled.ul`
  position: relative;
  flex: 1;
  margin: 0;
  padding: 0;
  overflow: hidden;
  list-style: none;
  border: 2px solid ${c.line};
  background: ${c.field};
`

const FavoriteRow = styled.li`
  height: 34px;
  margin-right: 21px;
  padding-left: 10px;
  line-height: 30px;
  border-bottom: 2px solid #2b2b2b;
`

const SideRail = styled.div`
  display: flex;
  flex-direction: column;
  align-items: center;
  padding-top: 29px;
  color: #777;
  background: #303030;
`

const RailGrip = styled.i`
  width: 6px;
  height: 44px;
  margin-top: 107px;
  background: repeating-linear-gradient(180deg, #909090 0 2px, transparent 2px 4px);
`

const favorites = ['修复 DC 偏移', '减少混响', '升调', '变换为 5.1', '变换为单声道', '变换为立体声', '强制限幅 -0.1dB', '旁白压缩器', '标准化为 -0.1dB']

const FavoritesPanel = () => (
  <Panel $grow={460}>
    <Tabs names={['文件', '收藏夹']} active="收藏夹" />
    <PanelTools>
      <PlainButton $gap={7} $color="#772d2d" aria-label="录制收藏"><Icon name="dot" /></PlainButton>
      <PlainButton $gap={30} $color={c.off} aria-label="运行收藏"><Icon name="play" /></PlainButton>
      <PlainButton $gap={28} $color={c.off} aria-label="删除收藏"><Icon name="trash" /></PlainButton>
      <PlainButton $gap={26} aria-label="编辑收藏"><Icon name="sort" /></PlainButton>
    </PanelTools>
    <FavoritesBody>
      <FavoritesMain>
        <FavoritesHead><span>收藏名称</span><span>快捷键</span></FavoritesHead>
        <FavoritesList>
          {favorites.map(name => <FavoriteRow key={name}>{name}</FavoriteRow>)}
          <ScrollThumb as="li" aria-hidden="true" $length={148} />
        </FavoritesList>
      </FavoritesMain>
      <SideRail>
        <Glyph width="6" height="12" viewBox="0 0 6 12"><path d="M6 0v12L0 6z" fill="currentColor" /></Glyph>
        <RailGrip />
      </SideRail>
    </FavoritesBody>
  </Panel>
)

/* ---------- effects rack ---------- */

const PresetRow = styled.div`
  display: flex;
  align-items: center;
  height: 35px;
  margin: 8px 12px 0 10px;
  color: ${c.dim};
`

const SelectWrap = styled.span`
  position: relative;
  display: flex;
  flex: ${p => (p.$width ? `0 0 ${p.$width}px` : 1)};
  height: 35px;
  margin-left: 6px;
  border-radius: 4px;
  background: #282828;
  select {
    flex: 1;
    padding: 0 0 0 ${p => p.$indent}px;
    border: 0;
    appearance: none;
    background: none;
    opacity: 1;
  }
  svg {
    position: absolute;
    right: 11px;
    top: 13px;
  }
`

const Separator = styled.i`
  width: 3px;
  height: 32px;
  margin: 0 11px 0 19px;
  background: #2e2e2e;
`

const RackTitle = styled.h2`
  height: 50px;
  padding-left: 10px;
  line-height: 46px;
  font-weight: 700;
`

const RackRow = styled.div`
  display: grid;
  grid-template-columns: 34px 36px 1fr 38px;
  align-items: center;
  height: 32px;
  margin-right: 21px;
  font-size: 20px;
  & + & { height: 34px; border-top: 2px solid #2b2b2b; }
`

const RackCell = styled.span`
  display: flex;
  align-items: center;
  justify-content: center;
  align-self: stretch;
  border-right: ${p => (p.$end ? 0 : '2px solid #292929')};
  font-weight: 500;
`

const PowerButton = styled.button`
  display: flex;
  align-items: center;
  justify-content: center;
  width: ${p => p.$width || 31}px;
  height: ${p => p.$height || 30}px;
  border: 2px solid #303030;
  border-radius: 4px;
  color: ${p => p.$color || '#bdbdbd'};
  background: ${p => (p.$on ? '#161616' : c.field)};
`

const SlotBody = styled.span`
  align-self: stretch;
  border-right: 2px solid #292929;
`

const GainArea = styled.div`
  display: grid;
  grid-template-columns: 219px minmax(0, 1fr);
  margin: 14px 21px 0 17px;
  color: ${c.dim};
`

const GainRow = styled.div`
  display: flex;
  align-items: center;
  height: 26px;
  margin-bottom: 16px;
  font-size: 20px;
`

const GainLabel = styled.span`
  width: 53px;
  font-size: 21px;
`

const KnobButton = styled.button`
  display: flex;
  align-items: center;
  gap: 8px;
  margin-left: 9px;
  color: #505050;
`

const MeterFrame = styled.div`
  display: flex;
  height: ${p => p.$height}px;
  margin-bottom: ${p => p.$after || 0}px;
  border: 3px solid #000;
`

const MeterTrack = styled.div`
  position: relative;
  display: grid;
  grid-template-rows: 1fr 1fr;
  gap: 2px;
  flex: 1;
  background: #1d1d1d;
`

const MeterLane = styled.div`
  display: flex;
  background: #1d1d1d;
`

const MeterFill = styled.i`
  background: ${p => p.$color};
`

const MeterPeak = styled.i`
  position: absolute;
  top: 0;
  bottom: 0;
  width: 2px;
  background: linear-gradient(180deg, #f6ec3a calc(50% - 1px), #1d1d1d 0 calc(50% + 1px), #f6ec3a 0);
`

const MeterClip = styled.div`
  width: 17px;
  border-left: 3px solid #000;
  background: linear-gradient(180deg, #1d1d1d calc(50% - 1px), #000 0 calc(50% + 1px), #1d1d1d 0);
`

const ScaleSvg = styled.svg`
  display: block;
  width: calc(100% - ${p => p.$inset}px);
  height: ${p => p.$height}px;
  margin-left: 4px;
  overflow: visible;
  font-size: ${p => p.$font}px;
`

const Meter = ({ height, after, green = 0, yellow = 0, peak }) => (
  <MeterFrame $height={height} $after={after}>
    <MeterTrack>
      {[0, 1].map(lane => (
        <MeterLane key={lane}>
          <MeterFill $color="#39f24a" style={{ width: `${green}%` }} />
          <MeterFill $color="#f4d148" style={{ width: `${yellow}%` }} />
        </MeterLane>
      ))}
      <MeterPeak style={{ left: peak }} />
    </MeterTrack>
    <MeterClip />
  </MeterFrame>
)

const Scale = ({ step, sub, inset, height, font }) => {
  const ticks = []
  for (let db = -60; db <= 0; db += sub) ticks.push(db)
  return (
    <ScaleSvg $inset={inset} $height={height} $font={font}>
      {ticks.map(db => {
        const x = `${((db + 60) / 60) * 100}%`
        const major = Number.isInteger((db + 60) / step)
        return <line key={db} x1={x} x2={x} y1="0" y2={major ? 8 : 4} stroke="#8a8a8a" strokeWidth="2" />
      })}
      <text x="-2" y={height - 8} fill="#9a9a9a">dB</text>
      {ticks.filter(db => db > -60 && Number.isInteger((db + 60) / step)).map(db => (
        <text key={db} x={`${((db + 60) / 60) * 100}%`} y={height - 8} textAnchor="middle" fill="#9a9a9a">{db}</text>
      ))}
    </ScaleSvg>
  )
}

const MixRow = styled.div`
  display: flex;
  align-items: center;
  height: 46px;
  padding: 0 26px 2px 17px;
  color: ${c.dim};
`

const MixLabel = styled.label`
  width: 86px;
`

const Slider = styled.input`
  width: 273px;
  height: 20px;
  margin: 0 10px 0 19px;
  appearance: none;
  background: none;
  &::-webkit-slider-runnable-track {
    height: 4px;
    background: #4a4a4a;
  }
  &::-webkit-slider-thumb {
    appearance: none;
    width: 18px;
    height: 18px;
    margin-top: -7px;
    border: 3px solid #4a4a4a;
    border-radius: 50%;
    background: ${c.panel};
    box-shadow: 0 0 0 4px ${c.panel};
  }
`

const MixValue = styled.span`
  margin-left: auto;
  font-size: 20px;
`

const RackFooter = styled.div`
  display: flex;
  align-items: center;
  height: 52px;
  margin: 0 8px;
  padding-right: 13px;
  border-top: 2px solid #2d2d2d;
  color: ${c.dim};
  label { margin-left: auto; }
`

const slots = [1, 2, 3, 4, 5, 6, 7, 8, 9, 10]

const EffectsPanel = ({ id }) => (
  <Panel>
    <Tabs names={['媒体浏览器', '效果组', '标记', '属性']} active="效果组" width={502} more />
    <PresetRow>
      <label htmlFor={`${id}-preset`}>预设:</label>
      <SelectWrap $indent={20}>
        <select id={`${id}-preset`} disabled><option>（默认）</option></select>
        <Icon name="chevronDown" />
      </SelectWrap>
      <PlainButton $gap={11} $color={c.off} aria-label="存储预设"><Icon name="save" /></PlainButton>
      <PlainButton $gap={14} $color={c.off} aria-label="删除预设"><Icon name="trash" /></PlainButton>
      <Separator />
      <PlainButton $color={c.off} aria-label="收藏预设"><Icon name="star" /></PlainButton>
    </PresetRow>
    <RackTitle>文件:未命名 1</RackTitle>
    <ListBox>
      {slots.map(n => (
        <RackRow key={n}>
          <RackCell>{n}</RackCell>
          <RackCell $end><PowerButton aria-label={`效果 ${n} 开关`}><Icon name="power" /></PowerButton></RackCell>
          <SlotBody />
          <RackCell $end as="button" aria-label={`效果 ${n} 菜单`}><Icon name="right" color="#b4b4b4" /></RackCell>
        </RackRow>
      ))}
      <ScrollThumb $length={212} />
    </ListBox>
    <GainArea>
      <div>
        {['输入:', '输出:'].map(label => (
          <GainRow key={label}>
            <GainLabel>{label}</GainLabel>
            <Icon name="bars" color="#4c4c4c" />
            <KnobButton aria-label={label}><Icon name="knob" />+0</KnobButton>
          </GainRow>
        ))}
      </div>
      <div>
        <Meter height={30} after={13} peak={1} />
        <Meter height={30} peak={1} />
        <Scale step={12} sub={2} inset={23} height={32} font={17} />
      </div>
    </GainArea>
    <MixRow>
      <MixLabel htmlFor={`${id}-mix`}>混合:</MixLabel>
      干
      <Slider id={`${id}-mix`} type="range" defaultValue="100" />
      湿
      <MixValue>100 %</MixValue>
    </MixRow>
    <RackFooter>
      <PowerButton $width={36} $height={34} aria-label="效果组开关"><Icon name="power" /></PowerButton>
      <PlainButton $gap={4} aria-label="显示效果列表"><PowerButton as="span" $on $width={37} $height={34} $color={c.blue}><Icon name="list" /></PowerButton></PlainButton>
      <PlainButton $gap={4} as="span"><Pill $width={107} disabled>应用</Pill></PlainButton>
      <label htmlFor={`${id}-process`}>处理:</label>
      <SelectWrap $width={174} $indent={12}>
        <select id={`${id}-process`} disabled><option>仅选区对象</option></select>
        <Icon name="chevronDown" />
      </SelectWrap>
    </RackFooter>
  </Panel>
)

/* ---------- history ---------- */

const HistoryRow = styled.div`
  display: grid;
  grid-template-columns: 31px 38px 1fr;
  align-items: center;
  height: 34px;
  padding-left: 4px;
  border-bottom: 2px solid #2b2b2b;
  font-weight: ${p => (p.$on ? 700 : 400)};
  background: ${p => (p.$on ? '#323232' : 'transparent')};
`

const HistoryIcon = styled.span`
  display: flex;
  justify-content: center;
  width: 24px;
  color: #b9b9b9;
`

const HistoryFooter = styled.div`
  display: flex;
  align-items: center;
  justify-content: space-between;
  flex: none;
  height: 52px;
  padding: 0 18px 0 10px;
  color: ${c.dim};
`

const PlainSpace = styled.div`
  flex: none;
  height: 10px;
`

const HistoryPanel = ({ grow, records }) => {
  const steps = [['打开', 'openDoc'], ...Array(records).fill(['录制', 'dot']), ['删除音频', 'trash']]
  return (
    <Panel $grow={grow}>
      <Tabs names={['历史记录', '视频']} active="历史记录" />
      <PlainSpace />
      <ListBox $fill>
        {steps.map(([label, icon], i) => (
          <HistoryRow key={i} $on={i === steps.length - 1}>
            <span>{i === steps.length - 1 && <Icon name="pointer" color="#b9b9b9" />}</span>
            <HistoryIcon><Icon name={icon} /></HistoryIcon>
            {label}
          </HistoryRow>
        ))}
      </ListBox>
      <HistoryFooter>
        {records + 1}撤销
        <PlainButton $color="#444" aria-label="清除历史记录"><Icon name="trash" /></PlainButton>
      </HistoryFooter>
    </Panel>
  )
}

/* ---------- editor ---------- */

// [x, half width, height above the axis, height below the axis]
const quietSpeech = [
  [45, 1, 2, 2], [125, 1, 3, 3], [295, 6, 9, 17], [303, 4, 3, 3], [314, 3, 14, 15], [317, 4, 5, 8], [322, 6, 4, 6], [338, 7, 6, 8], [347, 5, 4, 6], [354, 3, 4, 4],
  [413, 6, 8, 14], [420, 3, 2, 3], [432, 3, 15, 16], [440, 6, 2, 4], [455, 6, 7, 7], [464, 8, 3, 4],
  [516, 4, 6, 11], [529, 2, 5, 5], [539, 5, 4, 5], [548, 5, 4, 6], [562, 5, 4, 6], [572, 3, 5, 11], [583, 3, 2, 3], [594, 4, 8, 8], [602, 4, 3, 4], [616, 4, 3, 5], [625, 3, 5, 9], [637, 2, 5, 5], [648, 4, 9, 9], [655, 4, 4, 4], [668, 5, 3, 6],
  [731, 3, 7, 13], [742, 2, 5, 4], [754, 3, 8, 6], [761, 3, 4, 5], [775, 5, 3, 5], [786, 4, 4, 10], [796, 2, 3, 4], [807, 4, 7, 5], [812, 1, 3, 3]
]

const loudSpeech = [
  [179, 5, 139, 102], [184, 3, 40, 50], [195, 3, 80, 77], [202, 8, 45, 40], [215, 5, 45, 47], [222, 4, 71, 49], [229, 6, 43, 18],
  [277, 3, 89, 60], [281, 5, 129, 79], [286, 4, 34, 35], [298, 3, 118, 118], [305, 6, 32, 31], [319, 9, 45, 47], [325, 8, 45, 35], [346, 1, 14, 11],
  [370, 4, 107, 63], [374, 2, 93, 47], [385, 5, 38, 30], [393, 9, 45, 52], [399, 4, 55, 50], [412, 5, 69, 35], [420, 3, 104, 50], [433, 6, 28, 18], [440, 5, 39, 35], [448, 4, 43, 30], [458, 3, 62, 33], [467, 3, 89, 50], [480, 6, 45, 30], [487, 3, 88, 81], [493, 4, 57, 35], [503, 6, 60, 30], [513, 1, 20, 14],
  [558, 4, 141, 80], [564, 4, 40, 26], [571, 4, 45, 41], [580, 5, 54, 56], [587, 6, 45, 35], [598, 5, 54, 35], [607, 4, 96, 47], [617, 4, 43, 26], [626, 4, 59, 57], [631, 2, 38, 26]
]

const jitter = n => Math.abs(Math.sin(n * 12.9898) * 43758.5453) % 1

const wavePath = (bursts, mid, zoom = 1) => {
  const end = bursts[bursts.length - 1][0] + 2
  const up = []
  const down = []
  for (let x = 0; x <= end; x += 1) {
    let a = 0
    let b = 0
    bursts.forEach(([cx, half, top, bottom]) => {
      const d = Math.abs(x - cx) / (half + 1)
      if (d >= 1) return
      const curve = top > 60 ? 1 : 0.5
      const envelope = Math.pow(1 - d, curve) * (d < 0.25 ? 1 : 0.75 + jitter(x + cx) * 0.3)
      a = Math.max(a, top * envelope)
      b = Math.max(b, bottom * envelope)
    })
    up.push(`${x} ${(mid - Math.max(a * zoom, 0.5)).toFixed(1)}H${x + 1}`)
    down.unshift(`${x + 1} ${(mid + Math.max(b * zoom, 0.5)).toFixed(1)}H${x}`)
  }
  return `M${up.join('L')}L${down.join('L')}Z`
}

const sessions = {
  back: { length: 24.997, head: 15.054, clock: '0:15.054', total: '0:24.997', span: 1356, speech: quietSpeech, overview: 0.08 },
  front: { length: 23.312, head: 13.362, clock: '0:13.362', total: '0:23.312', span: 1105, speech: loudSpeech, overview: 0.06 }
}

const dbMarks = [-3, -6, -12, -18]
const dbPlace = (db, sign) => `${50 - sign * 50 * Math.pow(10, db / 20)}%`

const OverviewRow = styled.div`
  display: flex;
  align-items: center;
  flex: none;
  height: 53px;
  margin: 16px 0 29px;
  padding-left: 8px;
`

const Overview = styled.div`
  position: relative;
  display: flex;
  flex: 1;
  height: 53px;
  min-width: 0;
  padding: 0 5px;
  border: 4px solid #666;
  border-width: 4px 3px;
  border-radius: 6px;
  background: #333;
`

const OverviewHandle = styled.i`
  position: absolute;
  top: 0;
  bottom: 0;
  ${p => p.$edge}: -3px;
  width: 13px;
  border: 3px solid #6a6a6a;
  border-radius: 5px;
  background: linear-gradient(90deg, #333 2px, #6a6a6a 0 calc(100% - 2px), #333 0);
`

const OverviewSvg = styled.svg`
  flex: 1;
  height: 45px;
  min-width: 0;
  shape-rendering: crispEdges;
`

const SideIcons = styled.div`
  display: flex;
  align-items: center;
  gap: 24px;
  width: 140px;
  padding-left: 17px;
  color: #5c5c5c;
`

const RulerRow = styled.div`
  display: flex;
  align-items: flex-start;
  flex: none;
  height: 44px;
  padding-left: 13px;
`

const Ruler = styled.svg`
  flex: 1;
  height: 44px;
  min-width: 0;
  border: 3px solid #000;
  border-width: 3px 2px 0 3px;
  overflow: visible;
  font-size: 20px;
`

const SnapButtons = styled.div`
  display: flex;
  width: 144px;
  padding: 0 0 0 12px;
`

const SnapButton = styled.button`
  display: flex;
  align-items: center;
  justify-content: center;
  width: 38px;
  height: 38px;
  border: 2px solid #2d2d2d;
  border-radius: 4px;
  color: ${c.blue};
  background: #161616;
`

const Plots = styled.div`
  display: flex;
  flex-direction: column;
  flex: 1;
  min-height: 0;
  margin: 0 12px 0 13px;
  border-right: 2px solid #000;
  background: #000;
`

const PlotArea = styled.div`
  position: relative;
  display: flex;
  flex-direction: column;
  flex: ${p => p.$grow} 1 0;
  min-height: 0;
  padding: ${p => (p.$wave ? '2px 0 5px' : '0')};
`

const Channel = styled.div`
  display: grid;
  grid-template-columns: minmax(0, 1fr) 131px;
  flex: 1 1 0;
  min-height: 0;
`

const PlotSvg = styled.svg`
  display: block;
  width: 100%;
  height: 100%;
  border-left: 3px solid #000;
  border-bottom: ${p => (p.$divided ? '2px solid #7c7c7c' : '0')};
  shape-rendering: crispEdges;
`

const Axis = styled.div`
  position: relative;
  display: flex;
  align-items: center;
  justify-content: flex-end;
  min-height: 0;
  padding-right: 4px;
  border-bottom: ${p => (p.$divided ? '2px solid #000' : '0')};
  background: ${c.panel};
`

const AxisSvg = styled.svg`
  position: absolute;
  inset: 0;
  width: 100%;
  height: 100%;
  overflow: visible;
  font-size: 20px;
`

const ChannelButton = styled.button`
  position: relative;
  width: 39px;
  height: 32px;
  border: 2px solid #303030;
  border-radius: 4px;
  font-size: 18px;
  font-weight: 500;
  line-height: 26px;
  color: ${c.link};
  background: #161616;
`

const Splitter = styled.div`
  display: flex;
  align-items: center;
  justify-content: center;
  flex: none;
  position: relative;
  height: 16px;
  background: #333;
  &::before {
    content: '';
    width: 42px;
    height: 6px;
    background: repeating-linear-gradient(90deg, #666 0 2px, transparent 2px 4px);
  }
  svg { position: absolute; right: 31px; }
`

const Hud = styled.div`
  position: absolute;
  top: 42px;
  left: calc((100% - 131px) / 2);
  display: flex;
  align-items: center;
  width: 222px;
  height: 46px;
  transform: translateX(-50%);
  color: #575757;
  background: rgba(32, 32, 32, 0.88);
`

const HudGrip = styled.i`
  width: 15px;
  height: 46px;
  margin-right: 5px;
  background: repeating-linear-gradient(180deg, #a0a0a0 0 2px, #4b4b4b 2px 4px) center / 6px 18px no-repeat, #4b4b4b;
`

const HudKnob = styled.button`
  display: flex;
  align-items: center;
  gap: 8px;
  margin: 0 auto 0 8px;
  font-size: 20px;
`

const HudPin = styled.button`
  width: 33px;
  height: 34px;
  padding-left: 8px;
  border-left: 2px solid #5a5a5a;
  color: #c4c4c4;
`

const Transport = styled.div`
  display: flex;
  align-items: center;
  flex: none;
  height: 66px;
  padding-left: 20px;
  overflow: hidden;
`

const TimeCode = styled.output`
  flex: 0 0 236px;
  padding-top: 4px;
  font-size: 28px;
  color: #5c5c5c;
`

const Slack = styled.i`
  flex: 0 1 53px;
`

const TransportButton = styled.button`
  display: flex;
  align-items: center;
  justify-content: center;
  flex: none;
  width: ${p => (p.$boxed ? 50 : 53)}px;
  height: 42px;
  margin-right: ${p => (p.$boxed ? 2 : 0)}px;
  margin-left: ${p => (p.$boxed ? 2 : 0)}px;
  border-radius: 4px;
  border: 2px solid ${p => (p.$boxed ? '#303030' : 'transparent')};
  background: ${p => (p.$boxed ? '#292929' : 'none')};
  color: ${p => p.$color || '#b8b8b8'};
`

const TransportGap = styled.i`
  flex: none;
  width: 18px;
`

const transport = [
  ['stop', '停止'], ['playSmall', '播放', '#265226'], ['pause', '暂停'], ['prev', '上一个', c.off], ['rewind', '快退', c.off], ['forward', '快进', c.off],
  ['next', '下一个', c.off], ['record', '录制'], ['loop', '循环播放', c.off], ['skip', '跳过所选项目', c.off]
]
const zooms = [
  ['zoomInV', '放大振幅'], ['zoomOutV', '缩小振幅'], ['zoomInH', '放大时间'], ['zoomOutH', '缩小时间', c.off], ['fit', '全部缩小', c.off],
  ['zoomL', '放大入点'], ['zoomR', '放大出点'], ['zoomLR', '缩放至选区'], ['timer', '按时间缩放'], ['zoomBar', '重置振幅', c.off]
]
const hzMarks = [['Hz', 4], ['10k', 15], ['4k', 32], ['2k', 45], ['1k', 61], ['600', 72], ['400', 80], ['200', 91], ['100', 97]]

const TimeRuler = ({ session }) => {
  const at = t => `${(t / session.length) * 100}%`
  const seconds = Array.from({ length: Math.floor(session.length) + 1 }, (_, i) => i)
  return (
    <Ruler>
      {seconds.map(s => (
        <line key={s} x1={at(s)} x2={at(s)} y1={s % 5 ? 34 : 28} y2="41" stroke="#a0a0a0" strokeWidth="2" />
      ))}
      <text x="4" y="22" fill="#a0a0a0">hms</text>
      {seconds.filter(s => s && s % 5 === 0).map(s => (
        <text key={s} x={at(s)} y="22" textAnchor="middle" fill="#a0a0a0">{s.toFixed(1)}</text>
      ))}
      {session === sessions.back && <text x="100%" y="22" textAnchor="end" fill="#a0a0a0">25</text>}
      <svg x="0" overflow="visible"><path d="M-10 20h19v13l-9 8-10-8z" fill="#2c62a0" /></svg>
      <svg x={at(session.head)} overflow="visible"><path d="M-10 20h21v13l-10 8-11-8z" fill={c.blue} /></svg>
    </Ruler>
  )
}

const WaveChannel = ({ session, name, divided }) => {
  const at = t => `${(t / session.length) * 100}%`
  return (
    <Channel>
      <PlotSvg $divided={divided}>
        {[5, 10, 15, 20].map(t => <line key={t} x1={at(t)} x2={at(t)} y1="0" y2="100%" stroke="#103214" strokeWidth="2" />)}
        {dbMarks.flatMap(db => [1, -1].map(sign => (
          <line key={db * sign} x1="0" x2="100%" y1={dbPlace(db, sign)} y2={dbPlace(db, sign)} stroke="#0f3413" strokeWidth="2" />
        )))}
        <line x1="0" x2="100%" y1="50%" y2="50%" stroke="#3fc878" strokeWidth="2" />
        <svg width="100%" height="100%" viewBox={`0 0 ${session.span} 436`} preserveAspectRatio="none">
          <path d={wavePath(session.speech, 218)} fill="#04e39a" />
        </svg>
        <line x1="1" x2="1" y1="0" y2="100%" stroke="#8e1f1f" strokeWidth="2" strokeDasharray="4 5" />
        <line x1={at(session.head)} x2={at(session.head)} y1="0" y2="100%" stroke="#9a2323" strokeWidth="2" />
      </PlotSvg>
      <Axis $divided={divided}>
        <AxisSvg>
          <text x="16" y="22" fill="#a0a0a0">dB</text>
          {Array.from({ length: 18 }, (_, i) => -1 - i).flatMap(db => [1, -1].map(sign => (
            <line key={db * sign} x1="0" x2={dbMarks.includes(db) ? 8 : 4} y1={dbPlace(db, sign)} y2={dbPlace(db, sign)} stroke="#8a8a8a" strokeWidth="2" />
          )))}
          {dbMarks.flatMap(db => [1, -1].map(sign => (
            <text key={db * sign} x="15" y={dbPlace(db, sign)} dy="7" fill="#a0a0a0">{db}</text>
          )))}
          <line x1="0" x2="8" y1="50%" y2="50%" stroke="#8a8a8a" strokeWidth="2" />
          <text x="15" y="50%" dy="7" fill="#a0a0a0">-∞</text>
        </AxisSvg>
        <ChannelButton>{name}</ChannelButton>
      </Axis>
    </Channel>
  )
}

const SpectralChannel = ({ session, divided }) => {
  const head = `${(session.head / session.length) * 100}%`
  return (
    <Channel>
      <PlotSvg $divided={divided}>
        <line x1="1" x2="1" y1="0" y2="100%" stroke="#a79a9a" strokeWidth="2" strokeDasharray="4 5" />
        <line x1={head} x2={head} y1="0" y2="100%" stroke="#e6d2c8" strokeWidth="2" />
      </PlotSvg>
      <Axis $divided={divided}>
        <AxisSvg>
          {hzMarks.map(([label, y]) => {
            const strong = ['Hz', '10k', '1k', '100'].includes(label)
            return (
              <g key={label}>
                {label !== 'Hz' && <line x1="0" x2={strong ? 8 : 4} y1={`${y}%`} y2={`${y}%`} stroke="#8a8a8a" strokeWidth="2" />}
                <text x="15" y={`${y}%`} dy="7" fill={strong ? '#a8a8a8' : '#666'}>{label}</text>
              </g>
            )
          })}
        </AxisSvg>
      </Axis>
    </Channel>
  )
}

const EditorPanel = ({ session, front }) => {
  const head = `${(session.head / session.length) * 100}%`
  return (
    <Panel $grow={1} $focus={front}>
      <Tabs names={['编辑器: 未命名 1 *', '混音器']} active="编辑器: 未命名 1 *" />
      <OverviewRow>
        <Overview>
          <OverviewSvg>
            <line x1="0" x2="100%" y1="10" y2="10" stroke="#45c895" strokeWidth="2" />
            <line x1="0" x2="100%" y1="35" y2="35" stroke="#45c895" strokeWidth="2" />
            <svg width="100%" height="45" viewBox={`0 0 ${session.span} 45`} preserveAspectRatio="none">
              <path d={wavePath(session.speech, 10, session.overview)} fill="#2ef0b0" />
              <path d={wavePath(session.speech, 35, session.overview)} fill="#2ef0b0" />
            </svg>
            <line x1={head} x2={head} y1="0" y2="45" stroke="#c04a4a" strokeWidth="2" />
          </OverviewSvg>
          <OverviewHandle $edge="left" />
          <OverviewHandle $edge="right" />
        </Overview>
        <SideIcons><Icon name="fit" /><Icon name="rows" /></SideIcons>
      </OverviewRow>
      <RulerRow>
        <TimeRuler session={session} />
        <SnapButtons>
          <SnapButton aria-label="对齐"><Icon name="magnet" /></SnapButton>
          <SnapButton aria-label="添加标记"><Icon name="pin" /></SnapButton>
        </SnapButtons>
      </RulerRow>
      <Plots>
        <PlotArea $grow={880} $wave>
          <WaveChannel session={session} name="L" divided />
          <WaveChannel session={session} name="R" />
          <Hud>
            <HudGrip />
            <Icon name="bars" />
            <HudKnob aria-label="调整振幅"><Icon name="knob" />+0 dB</HudKnob>
            <HudPin aria-label="固定"><Icon name="tack" /></HudPin>
          </Hud>
        </PlotArea>
        <Splitter><Glyph width="12" height="6" viewBox="0 0 12 6"><path d="M0 0h12L6 6z" fill="#999" /></Glyph></Splitter>
        <PlotArea $grow={720}>
          <SpectralChannel session={session} divided />
          <SpectralChannel session={session} />
        </PlotArea>
      </Plots>
      <Transport>
        <TimeCode>{session.clock}</TimeCode>
        <Slack />
        <TransportButton>1x</TransportButton>
        {transport.map(([name, label, color]) => (
          <TransportButton key={name} $color={color} $boxed={front && name === 'record'} aria-label={label}><Icon name={name} /></TransportButton>
        ))}
        <TransportGap />
        <Slack />
        {zooms.map(([name, label, color]) => (
          <TransportButton key={name} $color={color} aria-label={label}><Icon name={name} /></TransportButton>
        ))}
      </Transport>
    </Panel>
  )
}

/* ---------- side strip, levels, selection, status ---------- */

const EditorRow = styled.div`
  display: grid;
  grid-template-columns: minmax(0, 1fr) ${p => (p.$front ? 63 : 74)}px;
  gap: 7px;
  flex: 1;
  min-height: 0;
`

const SoundTab = styled.div`
  width: ${p => p.$width}px;
  height: 40px;
  margin: 7px 0 5px;
  padding-left: 22px;
  overflow: hidden;
  line-height: 34px;
  font-weight: 500;
  white-space: nowrap;
  color: ${c.bright};
  border-right: 1px solid #303030;
`

const SoundLine = styled.p`
  height: ${p => p.$height}px;
  margin: 0 3px 0 2px;
  padding-left: 18px;
  overflow: hidden;
  line-height: ${p => p.$height}px;
  white-space: nowrap;
  color: ${p => (p.$dim ? c.dim : c.text)};
  border-top: 2px solid #2d2d2d;
`

const SoundEnd = styled.div`
  height: 24px;
  margin-top: auto;
  border: 2px solid ${c.panel};
  background: #1e1e1e;
`

const BottomRow = styled.div`
  display: grid;
  grid-template-columns: minmax(0, 1fr) 455px;
  gap: 7px;
  flex: none;
`

const Levels = styled.div`
  margin: 12px 11px 0 9px;
`

const SelectionTable = styled.table`
  margin: 3px 0 0 20px;
  border-collapse: collapse;
  table-layout: fixed;
  width: 430px;
  th, td {
    height: 36px;
    padding: 0;
    font-weight: 400;
    text-align: left;
  }
  td { padding-left: 4px; font-size: 20px; color: ${c.link}; }
`

const StatusBar = styled.footer`
  display: flex;
  align-items: center;
  flex: none;
  height: 35px;
  padding-left: 15px;
  background: #202020;
`

const StatusState = styled.span`
  margin-right: auto;
`

const StatusCell = styled.span`
  width: ${p => p.$width}px;
  height: 22px;
  padding: 0 15px;
  line-height: 22px;
  font-size: 20px;
  text-align: ${p => (p.$end ? 'right' : 'left')};
  white-space: nowrap;
  border-left: 1px solid #333;
`

const SoundStrip = ({ front }) => (
  <Panel>
    <SoundTab $width={front ? 28 : 39}>基本声音</SoundTab>
    <SoundLine $height={54}>无选择</SoundLine>
    <SoundLine $height={64} $dim>预设:</SoundLine>
    <SoundLine $height={55} />
    <SoundLine $height={55} />
    <SoundEnd />
  </Panel>
)

const AuditionWindow = ({ title, front, session, meter, size, free, children }) => (
  <AppWindow $front={front} aria-label={title}>
    <TitleBar $front={front}>
      <Lights>
        {(front ? ['#fe5f57', '#febc2e', '#28c840'] : ['#d3cfcc', '#d3cfcc', '#d3cfcc']).map((color, i) => (
          <Light key={i} $color={color} aria-label={['关闭', '最小化', '缩放'][i]} />
        ))}
      </Lights>
      {title}
    </TitleBar>
    <TopToolbar front={front} />
    <Columns>
      <Column>{children}</Column>
      <Column>
        <EditorRow $front={front}>
          <EditorPanel session={session} front={front} />
          <SoundStrip front={front} />
        </EditorRow>
        <BottomRow>
          <Panel>
            <Tabs names={['电平']} active="电平" flat />
            <Levels>
              <Meter height={72} {...meter} />
              <Scale step={3} sub={1} inset={24} height={36} font={17} />
            </Levels>
          </Panel>
          <Panel>
            <Tabs names={['选区/视图']} active="选区/视图" flat />
            <SelectionTable>
              <colgroup><col width="52" /><col width="128" /><col width="125" /><col /></colgroup>
              <thead><tr><th /><th>开始</th><th>结束</th><th>持续时间</th></tr></thead>
              <tbody>
                <tr><th>选区</th><td>0:00.000</td><td>0:00.000</td><td>0:00.000</td></tr>
                <tr><th>视图</th><td>0:00.000</td><td>{session.total}</td><td>{session.total}</td></tr>
              </tbody>
            </SelectionTable>
          </Panel>
        </BottomRow>
      </Column>
    </Columns>
    <StatusBar>
      <StatusState>正在录制</StatusState>
      <StatusCell $width={88} />
      <StatusCell $width={89} />
      <StatusCell $width={363}>48000 Hz ● 32 位（浮点） ● 立体声</StatusCell>
      <StatusCell $width={front ? 108 : 97}>{size}</StatusCell>
      <StatusCell $width={118} $end>{session.total}</StatusCell>
      <StatusCell $width={153}>{free}</StatusCell>
      <StatusCell $width={103} />
    </StatusBar>
  </AppWindow>
)

/* ---------- dock ---------- */

const DockBar = styled.nav`
  display: flex;
  align-items: center;
  justify-content: space-between;
  flex: none;
  height: 77px;
  margin: 2px 45px 9px;
  padding: 0 11px 5px;
  border: 1px solid rgba(255, 255, 255, 0.35);
  border-radius: 20px;
  font-family: ${macFont};
  background: linear-gradient(90deg, #6fa6e0, #6ba3de 12%, #b29a9f 15%, #fd9264 18%, #ffae56 26%, #ff8b5c 32%, #ff9f5a 40%, #ff8358 50%, #ff7b5b 62%, #ff8a55 72%, #ffa05a 80%, #ff8e5b 90%, #ff8450);
`

const DockButton = styled.button`
  position: relative;
  flex: none;
  width: 46px;
  height: 46px;
  border-radius: ${p => (p.$round ? '50%' : '11px')};
  background: ${p => p.$bg || 'none'};
  box-shadow: ${p => (p.$bg ? '0 2px 3px rgba(0, 0, 0, 0.25)' : 'none')};
  svg { display: block; overflow: visible; }
`

const RunningDot = styled.i`
  position: absolute;
  bottom: -14px;
  left: 19px;
  width: 7px;
  height: 7px;
  border-radius: 50%;
  background: ${p => p.$color};
`

const Badge = styled.span`
  position: absolute;
  top: -6px;
  right: -5px;
  height: 22px;
  padding: 0 3px;
  border-radius: 11px;
  font-size: 11px;
  line-height: 22px;
  color: #fff;
  background: #fc4236;
`

const DockRule = styled.i`
  width: 2px;
  height: 62px;
  margin: 0 7px;
  background: rgba(200, 70, 10, 0.75);
`

const word = (text, fill, size = 22) => <text x="23" y="31" fontSize={size} fontWeight="700" textAnchor="middle" fill={fill} fontFamily="'Noto Sans', sans-serif">{text}</text>
const office = (letter, dark, mid) => (
  <g><rect x="15" y="8" width="24" height="30" rx="3" fill={mid} /><rect x="15" y="23" width="24" height="15" rx="3" fill={dark} /><rect x="5" y="14" width="18" height="18" rx="3" fill={dark} /><text x="14" y="28" fontSize="14" fontWeight="700" textAnchor="middle" fill="#fff">{letter}</text></g>
)
const padColors = ['#39c553', '#f9a62b', '#f7cf34', '#e8453c', '#9aa0a6', '#ec4b7d', '#a259e6', '#2b8cf0', '#3ac0a0']
const petals = ['#f5a623', '#f8d648', '#a4cf4c', '#57b98a', '#5aa7dd', '#7f74cf', '#cf6fb4', '#ee6352']

const apps = [
  ['访达', 'linear-gradient(90deg, #1d9bf6 50%, #e8edf2 50%)', <g fill="none" stroke="#123" strokeWidth="2"><path d="M24 0c-4 10-5 16-5 26h6c0 8 1 14 2 20" stroke="#fff" strokeWidth="1" /><path d="M13 14v5M34 14v5M8 30c8 9 22 9 30 0" /></g>, '#0b1d66'],
  ['导航', '#fff', <g><circle cx="23" cy="23" r="20" fill="#35a2f0" /><circle cx="23" cy="23" r="17" fill="none" stroke="#8fd0fa" strokeWidth="1" /><path d="M23 7l9 22-9-5-9 5z" fill="#fff" /><circle cx="16" cy="33" r="1" fill="#fff" /><circle cx="23" cy="36" r="1" fill="#fff" /><circle cx="31" cy="33" r="1" fill="#fff" /></g>],
  ['1Password', '#cfd5e2', <g><circle cx="23" cy="23" r="18" fill="#fff" stroke="#1a6ad8" strokeWidth="5" /><path d="M20 14h6v18h-6z" fill="#16191e" /></g>],
  ['Safari', '#f2f2f4', <g><circle cx="23" cy="23" r="20" fill="#2693ee" /><circle cx="23" cy="23" r="18" fill="none" stroke="#bfe0fa" strokeWidth="2" strokeDasharray="1 3" /><path d="M38 9L26 26l-6-6z" fill="#f5433b" /><path d="M8 37l12-17 6 6z" fill="#f3f3f3" /></g>, '#0b1d66'],
  ['启动台', '#d5e3f2', <g>{padColors.map((f, i) => <rect key={f} x={8 + (i % 3) * 11} y={8 + Math.floor(i / 3) * 11} width="9" height="9" rx="3" fill={f} />)}</g>],
  ['Chrome', '#fff', <g><circle cx="23" cy="23" r="19" fill="#2ea24c" /><path d="M23 23L7 13a19 19 0 0 1 33 1H23z" fill="#e23b30" /><path d="M40 14a19 19 0 0 1-18 28l9-16-2-12z" fill="#fcc32d" /><circle cx="23" cy="23" r="9" fill="#fff" /><circle cx="23" cy="23" r="7" fill="#3378ea" /></g>],
  ['App Store', 'linear-gradient(#1fb0f8, #1668e8)', <path d="M26 9L13 33M20 9l14 24M8 28h20M32 28h6" stroke="#fff" strokeWidth="4" strokeLinecap="round" />],
  ['图书', 'linear-gradient(#ffa51e, #f97f0c)', <path d="M22 13c-4-3-9-3-13-1v21c4-2 9-2 13 1zM24 13c4-3 9-3 13-1v21c-4-2-9-2-13 1z" fill="#fff" />],
  ['鲸鱼', '#3fa3f5', <g><path d="M0 39c12 4 15 0 23 4 8-4 14 0 23-4v4l-8 3H8z" fill="#fff" /><circle cx="36" cy="29" r="6" fill="#fff" /><circle cx="34" cy="28" r="1" fill="#3fa3f5" /><circle cx="38" cy="28" r="1" fill="#3fa3f5" /></g>],
  ['Tor', 'linear-gradient(90deg, #7c27a8 50%, #40107a 50%)', <g fill="none" stroke="#fff" strokeWidth="3"><path d="M23 5a18 18 0 0 1 0 36M23 11a12 12 0 0 1 0 24M23 17a6 6 0 0 1 0 12" /></g>, null, true],
  ['云', 'linear-gradient(#3c9ff5, #176ae8)', <g><path d="M10 20c8-8 26-6 28 6 1 10-10 14-18 13S4 28 10 20z" fill="#fff" /><path d="M20 24v8M27 24v8" stroke="#2a7ae8" strokeWidth="3" strokeLinecap="round" /><path d="M28 8c5 1 8 4 9 9M29 4c7 1 11 5 12 12" fill="none" stroke="#cfe6ff" strokeWidth="2" /></g>],
  ['微信', '#07c160', <g><ellipse cx="19" cy="19" rx="13" ry="11" fill="#fff" /><ellipse cx="29" cy="28" rx="11" ry="9" fill="#fff" stroke="#07c160" strokeWidth="2" /><g fill="#07c160"><circle cx="15" cy="16" r="2" /><circle cx="23" cy="16" r="2" /><circle cx="26" cy="26" r="1" /><circle cx="32" cy="26" r="1" /></g></g>, '#7a0d0d'],
  ['QQ', '#fff', <g><path d="M23 3c9 0 11 7 11 13 4 6 6 12 5 16l-4-2-3 8H14l-3-8-4 2c-1-4 1-10 5-16 0-6 2-13 11-13z" fill="#111" /><ellipse cx="23" cy="30" rx="9" ry="10" fill="#fff" /><path d="M11 19c8 4 16 4 24 0l1 5c-8 4-18 4-26 0z" fill="#e8251f" /><ellipse cx="23" cy="15" rx="6" ry="3" fill="#f7a81b" /><path d="M13 40h8M25 40h8" stroke="#f7a81b" strokeWidth="4" strokeLinecap="round" /><circle cx="20" cy="9" r="2" fill="#fff" /><circle cx="26" cy="9" r="2" fill="#fff" /></g>, '#7a0d0d'],
  ['信息', 'linear-gradient(#5cdf66, #18b52c)', <path d="M23 9c10 0 16 6 16 13s-6 13-16 13l-4 0c-2 2-5 3-8 3 2-1 3-3 3-5-4-2-7-6-7-11 0-7 6-13 16-13z" fill="#eafbe9" />],
  ['邮件', 'linear-gradient(#1b6ee8, #26b7f7)', <g><rect x="7" y="13" width="32" height="21" rx="3" fill="#f2f5f8" /><path d="M8 14l15 12 15-12M8 33l11-10M38 33L27 23" fill="none" stroke="#9aa7b5" strokeWidth="2" /></g>],
  ['查找', '#dcecdc', <g><circle cx="23" cy="23" r="20" fill="#34c860" /><circle cx="23" cy="23" r="12" fill="none" stroke="#7ae492" strokeWidth="3" /><path d="M15 4h16l-8 16z" fill="#2b84e8" /><circle cx="23" cy="23" r="5" fill="#2470e0" stroke="#fff" strokeWidth="2" /></g>],
  ['地图', '#f2efe9', <g><path d="M0 11A11 11 0 0 1 11 0h4v46h-4A11 11 0 0 1 0 35z" fill="#d889d9" /><path d="M8 0h10v20H8z" fill="#4a90e8" /><path d="M26 0h9c6 0 11 5 11 11v24z" fill="#5cc15e" /><path d="M22 0l24 30" stroke="#fff" strokeWidth="6" /><path d="M30 46h8L22 26z" fill="#f4c540" /><circle cx="17" cy="29" r="11" fill="#2b7ce5" stroke="#fff" strokeWidth="2" /><path d="M17 21l6 15-6-4-6 4z" fill="#fff" /></g>],
  ['照片', '#fff', <g>{petals.map((f, i) => <ellipse key={f} cx="23" cy="13" rx="6" ry="9" fill={f} opacity=".88" transform={`rotate(${i * 45} 23 23)`} />)}</g>],
  ['FaceTime', 'linear-gradient(#5ee268, #15b52b)', <g fill="#fff"><rect x="7" y="14" width="21" height="18" rx="5" /><path d="M30 21l9-6v16l-9-6z" /></g>],
  ['日历', 'linear-gradient(#f0524a 30%, #fff 30%)', <g><text x="23" y="11" fontSize="10" fontWeight="600" textAnchor="middle" fill="#fff">9月</text><text x="23" y="39" fontSize="26" textAnchor="middle" fill="#222">15</text></g>],
  ['通讯录', '#ad844e', <g fill="#8b673a"><circle cx="23" cy="23" r="15" fill="none" stroke="#8b673a" strokeWidth="1" /><circle cx="23" cy="19" r="6" /><path d="M12 34c1-11 21-11 22 0z" /><path d="M44 10h3v8h-3z" fill="#57b4e8" /><path d="M44 20h3v8h-3z" fill="#5fc456" /><path d="M44 30h3v8h-3z" fill="#f49b36" /></g>],
  ['提醒事项', '#fff', <g><path d="M17 12h23M17 23h23M17 34h23" stroke="#cfcfcf" strokeWidth="2" /><circle cx="10" cy="12" r="4" fill="#1c7bf0" /><circle cx="10" cy="23" r="4" fill="#f0412f" /><circle cx="10" cy="34" r="4" fill="#f59a2c" /></g>],
  ['备忘录', 'linear-gradient(#fcc92c 27%, #f4f1ea 27%)', <path d="M0 14h46" stroke="#b8b3a6" strokeWidth="2" strokeDasharray="1 2" />],
  ['无边记', '#fff', <g><rect x="16" y="6" width="24" height="24" fill="#35c3f0" /><circle cx="19" cy="29" r="11" fill="#f5694a" /><path d="M8 31c8 6 10-18 14-14s-3 15 3 14 5-15 9-12-1 9 6 6" fill="none" stroke="#1b3a60" strokeWidth="3" /></g>],
  ['TV', 'linear-gradient(#27332f, #0c1010)', <g><path d="M14 15c0 2-1 4-3 4 0-2 1-4 3-4zM12 20c3-1 5-1 6 1-3 2-2 5 0 6-1 3-3 4-4 4h-4c-2 0-4-3-4-6 0-4 3-6 6-5z" fill="#fff" /><text x="30" y="30" fontSize="18" fontWeight="500" textAnchor="middle" fill="#fff">tv</text></g>],
  ['Acrobat', '#b60b08', <path d="M8 37c6-2 20-24 14-28-5-1-1 16 6 20 6 4 11 1 9-1-4-3-18 2-29 9z" fill="none" stroke="#fff" strokeWidth="3" />],
  ['Lightroom', '#001e36', word('LrC', '#3ea8ff', 20)],
  ['Photoshop', '#001e36', word('Ps', '#31a8ff')],
  ['Illustrator', '#330000', word('Ai', '#ff9a00')],
  ['录音', '#fa2c19', <g fill="none" stroke="#fff" strokeWidth="3"><path d="M9 9h11v28H9zM25 10h15M28 10v28M29 21h9v17M33 21" /></g>],
  ['录音 Live', '#e5211b', <g fill="none" stroke="#fff" strokeWidth="2"><path d="M11 7h9v18h-9zM24 7h13M27 7v18M27 15h9v10" /><text x="25" y="39" fontSize="10" fontWeight="700" textAnchor="middle" fill="#ffd7a8" stroke="none">•LIVE</text></g>],
  ['音乐', 'linear-gradient(#fb5c74, #fa233b)', <g fill="#fff"><path d="M17 11l18-4v5l-18 4z" /><path d="M17 11h3v23h-3zM32 8h3v21h-3z" /><circle cx="15" cy="34" r="5" /><circle cx="30" cy="30" r="5" /></g>],
  ['Audition', '#00005b', word('Au', '#9999ff'), '#7a0d0d'],
  ['Audition Beta', '#eceef2', word('Au', '#2b8ae0'), '#7a0d0d'],
  ['录音机', 'linear-gradient(#1fa0f5, #1c6cf0)', <path d="M10 21v4M15 17v12M20 11v24M23 23h3M26 11v24M31 17v12M36 21v4" stroke="#fff" strokeWidth="2" strokeLinecap="round" />],
  ['库乐队', '#20201f', <g><path d="M38-4L23 21" stroke="#c9a06b" strokeWidth="4" /><ellipse cx="17" cy="34" rx="10" ry="12" fill="#d7751c" transform="rotate(28 17 34)" /><ellipse cx="22" cy="23" rx="7" ry="8" fill="#a63c10" /><circle cx="20" cy="28" r="4" fill="#f2d9a2" /></g>],
  ['Logic Pro', '#1d1d1f', <g><rect x="1" y="1" width="44" height="44" rx="10" fill="none" stroke="#8d8d90" strokeWidth="2" /><circle cx="23" cy="21" r="16" fill="#d6d6da" /><path d="M23 5l4 16-4 16-4-16zM7 21l16-4 16 4-16 4z" fill="#9d9da4" /><circle cx="23" cy="21" r="4" fill="#f1f1f3" /><path d="M16 42h14" stroke="#eee" strokeWidth="2" /></g>],
  ['REAPER', null, <g><path d="M-2 14C4-8 42-8 48 12c-10-6-22-6-28 4C14 12 6 11-2 14z" fill="#3a83c6" /><path d="M20 14c10-8 22-6 28-2 0 16-10 30-22 36 2-14 0-26-6-34z" fill="#b2675a" /><path d="M-2 14c14-2 26 8 27 34C10 46-6 30-2 14z" fill="#5fb03c" /><path d="M8 11c12 4 18 16 17 32" fill="none" stroke="#fff" strokeWidth="3" /></g>],
  ['Arc Studio', '#1d2130', <path d="M9 33l9-20v20M25 33V13M25 13M31 13l7 20" fill="none" stroke="#fff" strokeWidth="3" />, null, true],
  ['Final Cut Pro', '#1c1c1e', <g><path d="M4 20h38v20H4z" fill="#333" /><path d="M6 22h34v18H6z" fill="#e9c53e" /><path d="M6 22h12v18H6z" fill="#e4453c" /><path d="M28 22h12v18H28z" fill="#4a8df0" /><path d="M18 32h14v8H18z" fill="#58cf6a" /><path d="M2 8l40-8 2 7L3 15zM2 15h42v6H2z" fill="#e8e8e8" /><path d="M8 7l5 6M20 5l5 6M32 3l5 5" stroke="#222" strokeWidth="4" /></g>],
  ['Pages', 'linear-gradient(#ffb33a, #f88c12)', <path d="M12 33L34 9l3 3-22 22zM10 38h27" stroke="#fff" strokeWidth="2" fill="#fff" />],
  ['Keynote', 'linear-gradient(#32a5f8, #1371ef)', <g><rect x="11" y="9" width="24" height="13" rx="2" fill="#f0f4f8" /><path d="M23 22v17M15 39h16" stroke="#fff" strokeWidth="2" /><circle cx="23" cy="14" r="5" fill="#f06a55" /></g>],
  ['Numbers', 'linear-gradient(#48da5c, #16b533)', <path d="M10 30h5v7h-5zM17 24h5v13h-5zM24 10h5v27h-5zM31 17h5v20h-5z" fill="#fff" />],
  ['Word', '#fff', office('W', '#185abd', '#41a5ee')],
  ['Excel', '#fff', office('X', '#107c41', '#33c481')],
  ['PowerPoint', '#fff', <g><circle cx="26" cy="23" r="15" fill="#ed6c47" /><rect x="5" y="14" width="18" height="18" rx="3" fill="#c43e1c" /><text x="14" y="28" fontSize="14" fontWeight="700" textAnchor="middle" fill="#fff">P</text></g>],
  ['播客', 'linear-gradient(#c062f0, #8a2be0)', <g fill="none" stroke="#fff" strokeWidth="3"><circle cx="23" cy="21" r="15" strokeWidth="2" /><circle cx="23" cy="21" r="9" strokeWidth="2" /><circle cx="23" cy="21" r="3" fill="#fff" /><path d="M23 28v9" strokeWidth="5" strokeLinecap="round" /></g>],
  ['系统设置', 'linear-gradient(#d8d8da, #98989c)', <g fill="none" stroke="#3a3a3c"><circle cx="23" cy="23" r="17" strokeWidth="3" strokeDasharray="2 1" /><circle cx="23" cy="23" r="13" strokeWidth="3" /><circle cx="23" cy="23" r="4" strokeWidth="3" /><path d="M23 19V10M27 25l7 5M19 25l-7 5" strokeWidth="3" /></g>, '#7a0d0d'],
  ['Steam', 'linear-gradient(#122a52, #1b6fae)', <g><circle cx="31" cy="17" r="8" fill="none" stroke="#fff" strokeWidth="4" /><path d="M0 24l16 8 10-10" stroke="#fff" strokeWidth="6" fill="none" /><circle cx="15" cy="33" r="6" fill="#fff" /></g>, null, true],
  ['SpectraLayers', '#0b0c0b', <g><circle cx="23" cy="23" r="23" fill="none" stroke="#eee" strokeWidth="2" /><path d="M8 17l7-4 7 20zM38 17l-7-4-7 20z" fill="#666" /><path d="M14 15c6-5 12-5 18 0l-9 19z" fill="#9be32d" /></g>, null, true],
  ['剪映', '#fff', <path d="M27 6L17 17h9zM19 41l10-12h-9zM12 20h22v5H12z" fill="#111" />],
  ['百度网盘', '#fff', <g fill="none" strokeWidth="5"><circle cx="15" cy="27" r="7" stroke="#2a8cf0" /><circle cx="31" cy="27" r="7" stroke="#35b8f2" /><circle cx="23" cy="15" r="6" stroke="#f0506a" /><path d="M16 42h14" stroke="#e33" strokeWidth="3" /></g>],
  ['终端', '#1b1b1d', <g><rect x="1" y="1" width="44" height="44" rx="10" fill="none" stroke="#b8b8bb" strokeWidth="2" /><path d="M8 11l6 4-6 4M16 20h7" stroke="#fff" strokeWidth="2" fill="none" /></g>],
  ['蜂鸟', 'linear-gradient(#2b9bf8, #1a66ea)', <path d="M8 8l14 12c3-5 8-7 12-4l6 1-6 4c0 7-4 11-9 12l2 8-8-9c-5 0-9-2-12-5l6-1C9 21 8 15 8 8z" fill="#e8f2ff" />],
  ['腾讯会议', '#1673ff', <path d="M7 30l8-13c2-2 3-2 5 0l4 6 4-6c2-2 4-2 5 0l7 11c1 2 0 3-2 3H28l-4-6-4 6H9z" fill="#fff" />],
  ['海豚', '#fff', <path d="M12 18l6-9c10-3 18 1 20 10 2 8 0 14-5 20 0-9-2-14-9-15-1 6-2 10-1 15-7-5-10-12-11-21z" fill="#4278f5" />],
  ['活动监视器', '#12201c', <g><rect x="1" y="1" width="44" height="44" rx="10" fill="none" stroke="#3f4a47" strokeWidth="2" /><path d="M4 14h38M4 23h38M4 32h38M14 4v38M23 4v38M32 4v38" stroke="#29443a" /><path d="M4 26h9l3-14 4 24 3-12h7l3-4 3 6h6" fill="none" stroke="#5fe0a8" strokeWidth="1" /></g>],
  ['显示器', '#1a2343', <g><rect x="3" y="3" width="40" height="34" rx="7" fill="#7aa6f2" /><path d="M14 8h18a5 5 0 0 1 0 11H14a5 5 0 0 1 0-11zM14 23h18a5 5 0 0 1 0 11H14a5 5 0 0 1 0-11z" fill="#16213f" /><circle cx="31" cy="13" r="5" fill="#fff" /><circle cx="15" cy="28" r="5" fill="#fff" /><path d="M2 39h42v5l-3 2H5l-3-2z" fill="#c9c9cc" /><path d="M17 46h12v4H17z" fill="#9a9a9e" /></g>],
  ['哔哩哔哩', 'linear-gradient(#ff7ab0, #ff2e7a)', <g><path d="M10 13h26v22H10zM17 8l4 5M29 8l-4 5" fill="none" stroke="#ff9fc6" strokeWidth="3" /><text x="23" y="31" fontSize="13" fontWeight="700" textAnchor="middle" fill="#fff">bilibili</text></g>]
]

const extras = [
  ['TeamTalk', '#fff', <g><path d="M20 11h18v20h-7V17H20z" fill="#18c3d8" /><path d="M9 18h18v20h-9V25H9z" fill="#2168f0" /></g>],
  ['闪电下载', '#ff7a12', <path d="M26 4c2 6 4 18 1 26L10 40c8-8 14-20 16-36zM30 30l12 7-11-2zM28 32l8 11-9-8zM24 34l1 10-5-9zM20 34l-3 8-3-4zM8 27l12 2-13 4z" fill="#fff" />, null, true],
  ['Permute', '#fff', <g><circle cx="23" cy="23" r="20" fill="#c7c9cc" /><g fill="#2b2b2e"><circle cx="20" cy="11" r="5" /><circle cx="32" cy="13" r="5" /><circle cx="11" cy="24" r="5" /><circle cx="17" cy="37" r="4" /><circle cx="35" cy="33" r="6" /></g><path d="M10 30L36 14l4 4-26 18z" fill="#f08a3c" /><path d="M14 36l26-18v6L18 40z" fill="#7b63c9" /></g>, '#7a0d0d']
]

const DockApp = ({ app: [name, bg, art, running, round] }) => (
  <DockButton $bg={bg} $round={round} aria-label={name}>
    <svg width="46" height="46" viewBox="0 0 46 46">{art}</svg>
    {name === '信息' && <Badge>1,076</Badge>}
    {running && <RunningDot $color={running} />}
  </DockButton>
)

const Dock = () => (
  <DockBar>
    {apps.map(app => <DockApp key={app[0]} app={app} />)}
    <DockRule />
    {extras.map(app => <DockApp key={app[0]} app={app} />)}
    <DockRule />
    <DockButton aria-label="文稿">
      <svg width="46" height="46" viewBox="0 0 46 46"><path d="M8-4h22l9 10v44H8z" fill="#f2f4f2" /><path d="M30-4l9 10h-9z" fill="#cfd2cf" /><path d="M12 4h14M12 9h20M12 14h18M12 19h22M12 24h16M12 29h20" stroke="#8fb08f" strokeWidth="2" /><text x="23" y="46" fontSize="10" fontWeight="700" textAnchor="middle" fill="#777">DOCX</text></svg>
    </DockButton>
    <DockButton aria-label="Safari 窗口">
      <svg width="46" height="46" viewBox="0 0 46 46"><path d="M-3 3h53v40H-3z" fill="#f6f2ec" /><path d="M2 5v36" stroke="#bbb" strokeWidth="2" strokeDasharray="2 2" /><path d="M10 8h14M10 13h18M10 31h12" stroke="#a9b8c8" strokeWidth="2" /><path d="M36 8h8v6h-8z" fill="#f0a040" /><circle cx="41" cy="40" r="9" fill="#2b8fe8" stroke="#fff" strokeWidth="2" /><path d="M46 35l-3 7-7 3z" fill="#fff" /></svg>
    </DockButton>
    <DockButton aria-label="转换窗口">
      <svg width="46" height="46" viewBox="0 0 46 46"><path d="M-3 5h53v34H-3z" fill="#3d2a20" /><path d="M-3 5h8v34h-8z" fill="#243038" /><path d="M16 18h24M16 22h24M16 26h24" stroke="#8c98a5" strokeWidth="2" strokeDasharray="4 1" /><circle cx="41" cy="40" r="9" fill="#eee" /><path d="M36 45l9-9" stroke="#e08040" strokeWidth="4" /></svg>
    </DockButton>
    <DockButton aria-label="废纸篓">
      <svg width="46" height="46" viewBox="0 0 46 46"><path d="M3 3l6 42c8 4 20 4 28 0L43 3z" fill="#e9e4e2" opacity=".85" /><ellipse cx="23" cy="3" rx="20" ry="5" fill="#f5d3c2" stroke="#f2efee" strokeWidth="2" /></svg>
    </DockButton>
  </DockBar>
)

const App = () => (
  <>
    <GlobalStyle />
    <Desktop>
      <TopMenu />
      <Windows>
        <AuditionWindow
          title="Adobe Audition"
          session={sessions.back}
          meter={{ green: 46.2, peak: '55.2%' }}
          size="9.15 MB"
          free="81.24 GB 空闲"
        >
          <FilesPanel />
          <EffectsPanel id="back" />
          <HistoryPanel grow={488} records={1} />
        </AuditionWindow>
        <AuditionWindow
          title="Adobe Audition (Beta)"
          front
          session={sessions.front}
          meter={{ green: 69.7, yellow: 8.5, peak: '87.7%' }}
          size="8.54 MB"
          free="81.23 GB 空闲"
        >
          <FavoritesPanel />
          <EffectsPanel id="front" />
          <HistoryPanel grow={874} records={6} />
        </AuditionWindow>
      </Windows>
      <Dock />
    </Desktop>
  </>
)

export default App
